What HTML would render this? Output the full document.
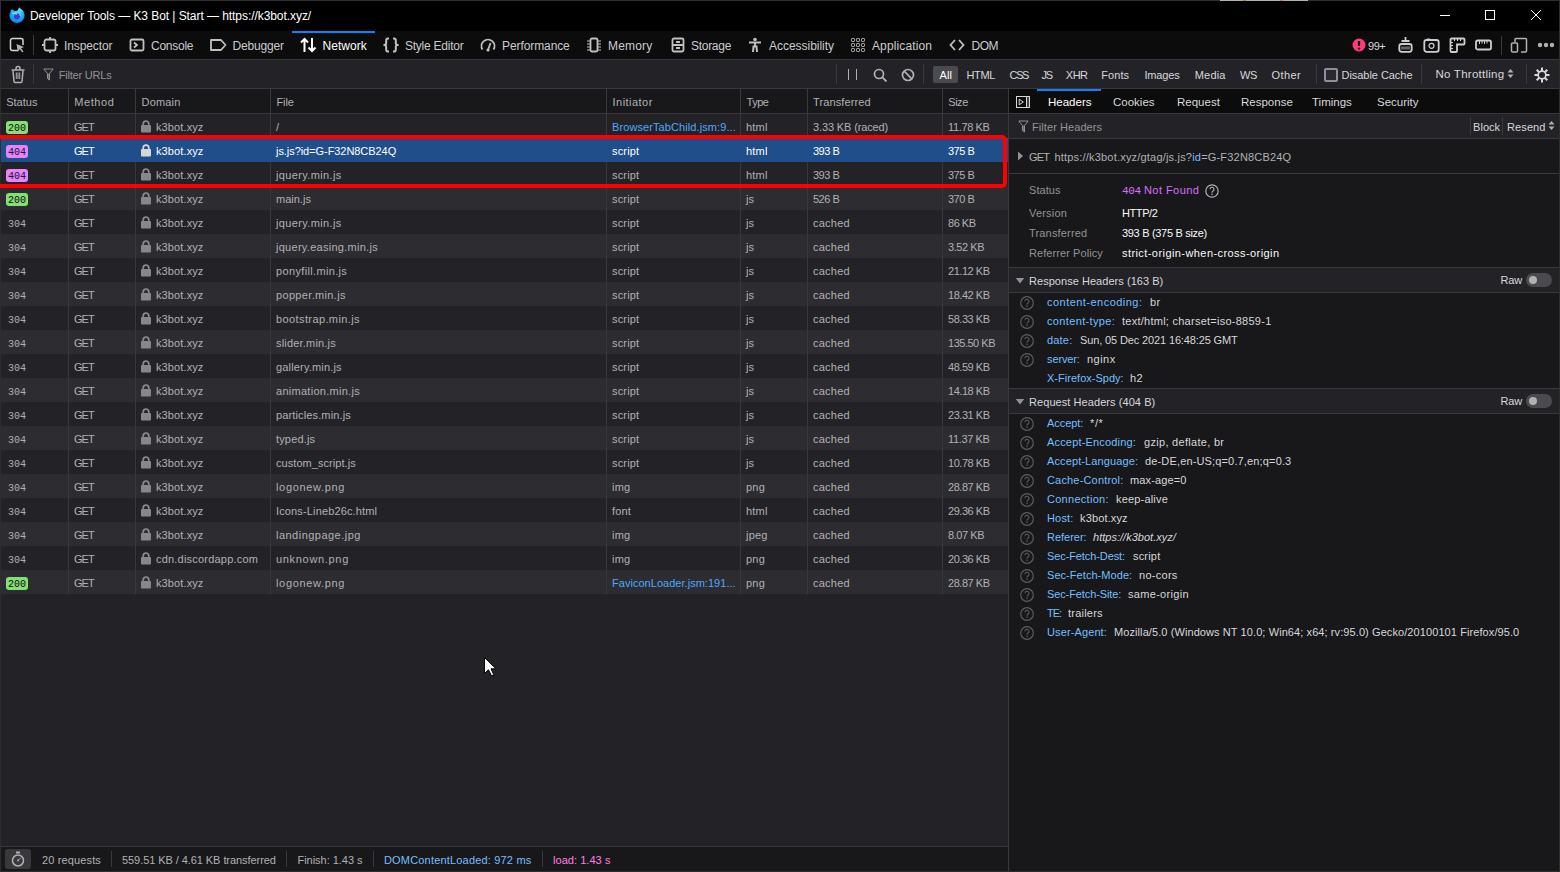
<!DOCTYPE html>
<html><head><meta charset="utf-8"><style>
html,body{margin:0;padding:0;width:1560px;height:872px;overflow:hidden;background:#000;font-family:'Liberation Sans', sans-serif}
.t{position:absolute;white-space:nowrap;font-family:'Liberation Sans', sans-serif}
svg{overflow:visible}
</style></head><body>
<div style="position:absolute;left:0px;top:0px;width:1560px;height:872px;background:#000;"></div>
<div style="position:absolute;left:0px;top:0px;width:1560px;height:1px;background:#2e2e2e;"></div>
<div style="position:absolute;left:1220px;top:0px;width:88px;height:1px;background:#b0b0b0;"></div>
<div style="position:absolute;left:1243px;top:0px;width:3px;height:1px;background:#c08030;"></div>
<div style="position:absolute;left:1280px;top:0px;width:3px;height:1px;background:#c08030;"></div>
<div class="t" style="left:30px;top:2px;line-height:29px;font-size:12px;color:#fff;font-family:'Liberation Sans', sans-serif;;letter-spacing:-0.061px">Developer Tools — K3 Bot | Start — https://k3bot.xyz/</div>
<svg style="position:absolute;left:9px;top:7px;" width="16" height="16" viewBox="0 0 16 16">
<defs><radialGradient id="fg" cx="55%" cy="35%" r="75%"><stop offset="0" stop-color="#60e6ff"/><stop offset="0.45" stop-color="#1fb0ff"/><stop offset="1" stop-color="#0a70e8"/></radialGradient>
<radialGradient id="fp" cx="50%" cy="60%" r="60%"><stop offset="0" stop-color="#4a2fd0"/><stop offset="1" stop-color="#2c50d8"/></radialGradient></defs>
<circle cx="8" cy="8.4" r="7.6" fill="url(#fg)"/>
<ellipse cx="6.6" cy="1.6" rx="3.4" ry="2.3" fill="#000"/>
<path d="M8.3 4.5 Q9.2 1.5 10.2 0.2 Q11.8 2.4 14.6 4.8 Q12 5 8.3 4.5 Z" fill="#48d8ff"/>
<path d="M1.5 3.5 Q2.5 2 3 3 Q3.6 2.5 4.5 3.2 L4 6 Z" fill="#2ab8ff"/>
<circle cx="8" cy="9.4" r="3.1" fill="url(#fp)"/>
<path d="M3 6.5 Q6 6 8.2 7.3" stroke="#a8f0ff" stroke-width="1.2" fill="none" opacity="0.8"/>
<path d="M10.5 6.5 Q11.5 7.5 11.3 9" stroke="#a8f0ff" stroke-width="0.9" fill="none" opacity="0.7"/>
</svg>
<div style="position:absolute;left:1440px;top:15px;width:10px;height:1px;background:#fff;"></div>
<div style="position:absolute;left:1485px;top:10px;width:10px;height:10px;background:transparent;border:1px solid #fff;box-sizing:border-box"></div>
<svg style="position:absolute;left:1530px;top:9px;" width="12" height="12" viewBox="0 0 12 12"><path d="M1 1 L11 11 M11 1 L1 11" stroke="#fff" stroke-width="1"/></svg>
<div style="position:absolute;left:1px;top:31px;width:1558px;height:28px;background:#0c0c0d;"></div>
<div style="position:absolute;left:1px;top:59px;width:1558px;height:1px;background:#38383d;"></div>
<svg style="position:absolute;left:9px;top:37px;" width="17" height="17" viewBox="0 0 17 17"><path d="M9 13.5 H3.5 a2 2 0 0 1 -2 -2 V3.5 a2 2 0 0 1 2 -2 H12 a2 2 0 0 1 2 2 V8" stroke="#d7d7db" stroke-width="1.5" fill="none"/>
<path d="M7.5 7 L15 10 L12 11.2 L14.5 14.5 L13.3 15.5 L10.8 12.2 L8.8 14.8 Z" fill="#b1b1b3"/></svg>
<div style="position:absolute;left:33px;top:35px;width:1px;height:20px;background:#38383d;"></div>
<svg style="position:absolute;left:42px;top:37px;" width="16" height="16" viewBox="0 0 16 16"><rect x="2.5" y="2.5" width="11" height="11" rx="2" stroke="#c0c0c2" stroke-width="1.8" fill="none"/><path d="M8 0 V2.5 M8 13.5 V16 M0 8 H2.5 M13.5 8 H16" stroke="#c0c0c2" stroke-width="1.8" fill="none"/></svg>
<div class="t" style="left:64px;top:32px;line-height:28px;font-size:12px;color:#cacace;font-family:'Liberation Sans', sans-serif;;letter-spacing:-0.105px">Inspector</div>
<svg style="position:absolute;left:129px;top:37px;" width="16" height="16" viewBox="0 0 16 16"><rect x="1.5" y="2.5" width="13" height="11" rx="1.5" stroke="#c0c0c2" stroke-width="1.8" fill="none"/><path d="M5 5.5 L8 8 L5 10.5" stroke="#c0c0c2" stroke-width="1.8" fill="none"/></svg>
<div class="t" style="left:151px;top:32px;line-height:28px;font-size:12px;color:#cacace;font-family:'Liberation Sans', sans-serif;;letter-spacing:-0.247px">Console</div>
<svg style="position:absolute;left:210px;top:37px;" width="17" height="16" viewBox="0 0 17 16"><path d="M1 3 H11 L15.5 8 L11 13 H1 Z" stroke-linejoin="round" stroke="#c0c0c2" stroke-width="1.8" fill="none"/></svg>
<div class="t" style="left:232.5px;top:32px;line-height:28px;font-size:12px;color:#cacace;font-family:'Liberation Sans', sans-serif;;letter-spacing:-0.175px">Debugger</div>
<svg style="position:absolute;left:300px;top:37px;" width="17" height="16" viewBox="0 0 17 16"><path d="M4.5 15 V2 M1 5.5 L4.5 2 L8 5.5 M12 1 V14 M8.5 10.5 L12 14 L15.5 10.5" stroke="#fff" stroke-width="2" fill="none"/></svg>
<div class="t" style="left:322.5px;top:32px;line-height:28px;font-size:12px;color:#fff;font-family:'Liberation Sans', sans-serif;;letter-spacing:0.026px">Network</div>
<svg style="position:absolute;left:383px;top:37px;" width="16" height="16" viewBox="0 0 16 16"><path d="M6 1.5 H5 Q3.2 1.5 3.2 3.3 V6 Q3.2 8 1.2 8 Q3.2 8 3.2 10 V12.7 Q3.2 14.5 5 14.5 H6 M10 1.5 H11 Q12.8 1.5 12.8 3.3 V6 Q12.8 8 14.8 8 Q12.8 8 12.8 10 V12.7 Q12.8 14.5 11 14.5 H10" stroke="#c0c0c2" stroke-width="2" fill="none" stroke-linejoin="round"/></svg>
<div class="t" style="left:405px;top:32px;line-height:28px;font-size:12px;color:#cacace;font-family:'Liberation Sans', sans-serif;;letter-spacing:-0.245px">Style Editor</div>
<svg style="position:absolute;left:480px;top:37px;" width="16" height="16" viewBox="0 0 16 16"><path d="M2.5 12.5 A6.5 6.5 0 1 1 13.5 12.5" stroke="#c0c0c2" stroke-width="1.8" fill="none"/><path d="M8 13 L10.5 6" stroke="#c0c0c2" stroke-width="1.8" fill="none"/><circle cx="8" cy="13" r="1.6" fill="#c0c0c2"/></svg>
<div class="t" style="left:502px;top:32px;line-height:28px;font-size:12px;color:#cacace;font-family:'Liberation Sans', sans-serif;;letter-spacing:-0.090px">Performance</div>
<svg style="position:absolute;left:586px;top:37px;" width="16" height="16" viewBox="0 0 16 16"><rect x="4.5" y="1.5" width="7" height="13" rx="1.5" stroke="#c0c0c2" stroke-width="1.8" fill="none"/><path d="M1 4 H4 M1 7 H4 M1 10 H4 M1 13 H4 M12 4 H15 M12 7 H15 M12 10 H15 M12 13 H15" stroke="#c0c0c2" stroke-width="1" fill="none"/></svg>
<div class="t" style="left:608px;top:32px;line-height:28px;font-size:12px;color:#cacace;font-family:'Liberation Sans', sans-serif;;letter-spacing:0.193px">Memory</div>
<svg style="position:absolute;left:670px;top:37px;" width="16" height="16" viewBox="0 0 16 16"><rect x="2.5" y="1.5" width="11" height="13" rx="1.5" stroke="#c0c0c2" stroke-width="1.8" fill="none"/><path d="M2.5 8 H13.5 M6 5 H10 M6 11 H10" stroke="#c0c0c2" stroke-width="1.8" fill="none"/></svg>
<div class="t" style="left:691px;top:32px;line-height:28px;font-size:12px;color:#cacace;font-family:'Liberation Sans', sans-serif;;letter-spacing:-0.288px">Storage</div>
<svg style="position:absolute;left:747px;top:37px;" width="16" height="16" viewBox="0 0 16 16"><circle cx="8" cy="2.5" r="1.8" fill="#c0c0c2"/><path d="M2 5.5 H14 M8 5.5 V9.5 M6 15 L6.5 9.5 H9.5 L10 15" stroke="#c0c0c2" stroke-width="2" fill="none"/></svg>
<div class="t" style="left:769px;top:32px;line-height:28px;font-size:12px;color:#cacace;font-family:'Liberation Sans', sans-serif;;letter-spacing:-0.028px">Accessibility</div>
<svg style="position:absolute;left:850px;top:37px;" width="16" height="16" viewBox="0 0 16 16"><rect x="1.5" y="1.5" width="3" height="3" rx="0.8" stroke="#c0c0c2" stroke-width="1" fill="none"/><rect x="1.5" y="6.5" width="3" height="3" rx="0.8" stroke="#c0c0c2" stroke-width="1" fill="none"/><rect x="1.5" y="11.5" width="3" height="3" rx="0.8" stroke="#c0c0c2" stroke-width="1" fill="none"/><rect x="6.5" y="1.5" width="3" height="3" rx="0.8" stroke="#c0c0c2" stroke-width="1" fill="none"/><rect x="6.5" y="6.5" width="3" height="3" rx="0.8" stroke="#c0c0c2" stroke-width="1" fill="none"/><rect x="6.5" y="11.5" width="3" height="3" rx="0.8" stroke="#c0c0c2" stroke-width="1" fill="none"/><rect x="11.5" y="1.5" width="3" height="3" rx="0.8" stroke="#c0c0c2" stroke-width="1" fill="none"/><rect x="11.5" y="6.5" width="3" height="3" rx="0.8" stroke="#c0c0c2" stroke-width="1" fill="none"/><rect x="11.5" y="11.5" width="3" height="3" rx="0.8" stroke="#c0c0c2" stroke-width="1" fill="none"/></svg>
<div class="t" style="left:872px;top:32px;line-height:28px;font-size:12px;color:#cacace;font-family:'Liberation Sans', sans-serif;;letter-spacing:0.118px">Application</div>
<svg style="position:absolute;left:949px;top:37px;" width="16" height="16" viewBox="0 0 16 16"><path d="M6 3 L1.5 8 L6 13 M10 3 L14.5 8 L10 13" stroke="#c0c0c2" stroke-width="1.8" fill="none"/></svg>
<div class="t" style="left:971.5px;top:32px;line-height:28px;font-size:12px;color:#cacace;font-family:'Liberation Sans', sans-serif;;letter-spacing:-0.500px">DOM</div>
<div style="position:absolute;left:292px;top:31px;width:83px;height:2px;background:#0a84ff;"></div>
<svg style="position:absolute;left:1352px;top:38px;" width="14" height="14" viewBox="0 0 14 14"><circle cx="7" cy="7" r="6.5" fill="#ff3a77"/><path d="M7 3 V8" stroke="#0c0c0d" stroke-width="2.2"/><circle cx="7" cy="10.6" r="1.2" fill="#0c0c0d"/></svg>
<div class="t" style="left:1368px;top:32px;line-height:28px;font-size:11px;color:#d7d7db;font-family:'Liberation Sans', sans-serif;;letter-spacing:-0.449px">99+</div>
<svg style="position:absolute;left:1398px;top:36px;" width="15" height="17" viewBox="0 0 15 17"><path d="M7.5 1 V5 M3.5 5 H11.5" stroke="#cdcdd1" stroke-width="1.8"/><rect x="1.3" y="8" width="12.4" height="7.8" rx="2.2" stroke="#cdcdd1" stroke-width="1.8" fill="none"/><rect x="3" y="10.5" width="9" height="3" fill="#cdcdd1" opacity="0.45"/></svg>
<svg style="position:absolute;left:1423px;top:37px;" width="17" height="16" viewBox="0 0 17 16"><rect x="1.3" y="3" width="14.4" height="11.8" rx="2.3" stroke="#cdcdd1" stroke-width="1.8" fill="none"/><circle cx="8.5" cy="8.8" r="2.5" stroke="#cdcdd1" stroke-width="1.2" fill="none"/><path d="M4.5 2.2 H6.5" stroke="#cdcdd1" stroke-width="1.5" stroke-linecap="round"/></svg>
<svg style="position:absolute;left:1449px;top:37px;" width="17" height="16" viewBox="0 0 17 16"><path d="M2.5 1.5 H14.5 a1 1 0 0 1 1 1 V6.5 a1 1 0 0 1 -1 1 H8 V14 a1 1 0 0 1 -1 1 H2.5 a1 1 0 0 1 -1 -1 V2.5 a1 1 0 0 1 1 -1 Z" stroke="#cdcdd1" stroke-width="1.8" fill="none"/><path d="M5.5 2 V4 M8.5 2 V4 M11.5 2 V4 M2 5.5 H4 M2 8.5 H4 M2 11.5 H4" stroke="#cdcdd1" stroke-width="1"/></svg>
<svg style="position:absolute;left:1475px;top:39px;" width="17" height="12" viewBox="0 0 17 12"><rect x="1" y="1.5" width="15" height="9" rx="1.8" stroke="#cdcdd1" stroke-width="1.8" fill="none"/><path d="M4.5 2 V5 M7 2 V4.5 M9.5 2 V5 M12 2 V4.5" stroke="#cdcdd1" stroke-width="1"/></svg>
<div style="position:absolute;left:1501px;top:36px;width:1px;height:19px;background:#38383d;"></div>
<svg style="position:absolute;left:1510px;top:37px;" width="18" height="17" viewBox="0 0 18 17"><path d="M5 5 V2.5 a1 1 0 0 1 1 -1 H15.5 a1 1 0 0 1 1 1 V14 a1 1 0 0 1 -1 1 H11" stroke="#b1b1b3" stroke-width="1.5" fill="none"/><rect x="1.5" y="6" width="6" height="9" rx="1" stroke="#b1b1b3" stroke-width="1.5" fill="none"/></svg>
<svg style="position:absolute;left:1537px;top:42px;" width="18" height="6" viewBox="0 0 18 6"><circle cx="3" cy="3" r="2.2" fill="#b1b1b3"/><circle cx="9" cy="3" r="2.2" fill="#b1b1b3"/><circle cx="15" cy="3" r="2.2" fill="#b1b1b3"/></svg>
<div style="position:absolute;left:1px;top:60px;width:1558px;height:28px;background:#232327;"></div>
<div style="position:absolute;left:1px;top:88px;width:1558px;height:1px;background:#38383d;"></div>
<svg style="position:absolute;left:10px;top:66px;" width="16" height="18" viewBox="0 0 16 18"><path d="M1.5 4 H14.5 M6 4 V2.5 a1.5 1.5 0 0 1 4 0 V4" stroke="#b1b1b3" stroke-width="1.5" fill="none"/><path d="M3 4.5 L4 15.5 a1 1 0 0 0 1 1 H11 a1 1 0 0 0 1 -1 L13 4.5" stroke="#b1b1b3" stroke-width="1.5" fill="none"/><path d="M6.3 6.5 V13 M8 6.5 V13 M9.7 6.5 V13" stroke="#b1b1b3" stroke-width="1"/></svg>
<div style="position:absolute;left:33px;top:64px;width:1px;height:20px;background:#38383d;"></div>
<svg style="position:absolute;left:43px;top:68px;" width="11" height="13" viewBox="0 0 11 13"><path d="M4.5 5.5 H6.5 V12 L4.5 10.5 Z" fill="#6a6a6e"/><path d="M0.8 1 H10.2 L6.5 5.5 V12 L4.5 10.5 V5.5 Z" stroke="#939395" stroke-width="1" fill="none" stroke-linejoin="round"/></svg>
<div class="t" style="left:58.7px;top:61px;line-height:28px;font-size:11px;color:#939395;font-family:'Liberation Sans', sans-serif;;letter-spacing:-0.200px">Filter URLs</div>
<div style="position:absolute;left:836px;top:64px;width:1px;height:20px;background:#38383d;"></div>
<div style="position:absolute;left:848px;top:69px;width:1px;height:11px;background:#b1b1b3;"></div>
<div style="position:absolute;left:856px;top:69px;width:1px;height:11px;background:#b1b1b3;"></div>
<svg style="position:absolute;left:873px;top:68px;" width="15" height="15" viewBox="0 0 15 15"><circle cx="6" cy="6" r="4.5" stroke="#b1b1b3" stroke-width="1.7" fill="none"/><path d="M9.2 9.2 L13.5 13.5" stroke="#b1b1b3" stroke-width="1.8"/></svg>
<svg style="position:absolute;left:901px;top:68px;" width="14" height="14" viewBox="0 0 14 14"><circle cx="7" cy="7" r="5.5" stroke="#b1b1b3" stroke-width="1.7" fill="none"/><path d="M3.2 3.2 L10.8 10.8" stroke="#b1b1b3" stroke-width="1.7"/></svg>
<div style="position:absolute;left:923px;top:64px;width:1px;height:20px;background:#38383d;"></div>
<div style="position:absolute;left:933px;top:66px;width:25px;height:17px;background:#4a4a4f;border-radius:2px"></div>
<div class="t" style="left:939.5px;top:61px;line-height:28px;font-size:11px;color:#fff;font-family:'Liberation Sans', sans-serif;;letter-spacing:0.094px">All</div>
<div class="t" style="left:966.5px;top:61px;line-height:28px;font-size:11px;color:#d7d7db;font-family:'Liberation Sans', sans-serif;;letter-spacing:-0.359px">HTML</div>
<div class="t" style="left:1009.6px;top:61px;line-height:28px;font-size:11px;color:#d7d7db;font-family:'Liberation Sans', sans-serif;;letter-spacing:-1.408px">CSS</div>
<div class="t" style="left:1041.5px;top:61px;line-height:28px;font-size:11px;color:#d7d7db;font-family:'Liberation Sans', sans-serif;;letter-spacing:-1.172px">JS</div>
<div class="t" style="left:1065.8px;top:61px;line-height:28px;font-size:11px;color:#d7d7db;font-family:'Liberation Sans', sans-serif;;letter-spacing:-0.506px">XHR</div>
<div class="t" style="left:1101.2px;top:61px;line-height:28px;font-size:11px;color:#d7d7db;font-family:'Liberation Sans', sans-serif;;letter-spacing:0.094px">Fonts</div>
<div class="t" style="left:1144.5px;top:61px;line-height:28px;font-size:11px;color:#d7d7db;font-family:'Liberation Sans', sans-serif;;letter-spacing:-0.182px">Images</div>
<div class="t" style="left:1194.7px;top:61px;line-height:28px;font-size:11px;color:#d7d7db;font-family:'Liberation Sans', sans-serif;;letter-spacing:0.206px">Media</div>
<div class="t" style="left:1240px;top:61px;line-height:28px;font-size:11px;color:#d7d7db;font-family:'Liberation Sans', sans-serif;;letter-spacing:-0.359px">WS</div>
<div class="t" style="left:1271.6px;top:61px;line-height:28px;font-size:11px;color:#d7d7db;font-family:'Liberation Sans', sans-serif;;letter-spacing:0.374px">Other</div>
<div style="position:absolute;left:1316px;top:64px;width:1px;height:20px;background:#38383d;"></div>
<div style="position:absolute;left:1324px;top:68px;width:14px;height:14px;background:#2a2a2e;border:2px solid #8f8f9d;border-radius:2px;box-sizing:border-box"></div>
<div class="t" style="left:1341.5px;top:61px;line-height:28px;font-size:11px;color:#d7d7db;font-family:'Liberation Sans', sans-serif;;letter-spacing:-0.043px">Disable Cache</div>
<div style="position:absolute;left:1421px;top:64px;width:1px;height:20px;background:#38383d;"></div>
<div class="t" style="left:1435.4px;top:60px;line-height:28px;font-size:11.5px;color:#d7d7db;font-family:'Liberation Sans', sans-serif;;letter-spacing:0.261px">No Throttling</div>
<svg style="position:absolute;left:1507px;top:68px;" width="7" height="11" viewBox="0 0 7 11"><path d="M0.5 4.5 L3.5 1 L6.5 4.5 Z M0.5 6.5 L3.5 10 L6.5 6.5 Z" fill="#b1b1b3"/></svg>
<div style="position:absolute;left:1526px;top:64px;width:1px;height:20px;background:#38383d;"></div>
<svg style="position:absolute;left:1533px;top:66px;" width="18" height="18" viewBox="0 0 18 18"><circle cx="9" cy="9" r="3.8" stroke="#d7d7db" stroke-width="1.8" fill="none"/><path d="M9 9 L16.50 9.00" stroke="#d7d7db" stroke-width="2"/><path d="M9 9 L14.30 14.30" stroke="#d7d7db" stroke-width="2"/><path d="M9 9 L9.00 16.50" stroke="#d7d7db" stroke-width="2"/><path d="M9 9 L3.70 14.30" stroke="#d7d7db" stroke-width="2"/><path d="M9 9 L1.50 9.00" stroke="#d7d7db" stroke-width="2"/><path d="M9 9 L3.70 3.70" stroke="#d7d7db" stroke-width="2"/><path d="M9 9 L9.00 1.50" stroke="#d7d7db" stroke-width="2"/><path d="M9 9 L14.30 3.70" stroke="#d7d7db" stroke-width="2"/><circle cx="9" cy="9" r="3" fill="#232327"/></svg>
<div style="position:absolute;left:1px;top:89px;width:1007px;height:757px;background:#232327;"></div>
<div style="position:absolute;left:1px;top:89px;width:1007px;height:24px;background:#18181a;"></div>
<div style="position:absolute;left:1px;top:113px;width:1007px;height:1px;background:#38383d;"></div>
<div style="position:absolute;left:68px;top:89px;width:1px;height:24px;background:#38383d;"></div>
<div style="position:absolute;left:135px;top:89px;width:1px;height:24px;background:#38383d;"></div>
<div style="position:absolute;left:270px;top:89px;width:1px;height:24px;background:#38383d;"></div>
<div style="position:absolute;left:606px;top:89px;width:1px;height:24px;background:#38383d;"></div>
<div style="position:absolute;left:740px;top:89px;width:1px;height:24px;background:#38383d;"></div>
<div style="position:absolute;left:807px;top:89px;width:1px;height:24px;background:#38383d;"></div>
<div style="position:absolute;left:942px;top:89px;width:1px;height:24px;background:#38383d;"></div>
<div class="t" style="left:6.2px;top:90px;line-height:24px;font-size:11px;color:#b1b1b3;font-family:'Liberation Sans', sans-serif;;letter-spacing:0.014px">Status</div>
<div class="t" style="left:74.3px;top:90px;line-height:24px;font-size:11px;color:#b1b1b3;font-family:'Liberation Sans', sans-serif;;letter-spacing:0.580px">Method</div>
<div class="t" style="left:141.5px;top:90px;line-height:24px;font-size:11px;color:#b1b1b3;font-family:'Liberation Sans', sans-serif;;letter-spacing:0.182px">Domain</div>
<div class="t" style="left:276.5px;top:90px;line-height:24px;font-size:11px;color:#b1b1b3;font-family:'Liberation Sans', sans-serif;;letter-spacing:-0.130px">File</div>
<div class="t" style="left:612.6px;top:90px;line-height:24px;font-size:11px;color:#b1b1b3;font-family:'Liberation Sans', sans-serif;;letter-spacing:0.456px">Initiator</div>
<div class="t" style="left:746.5px;top:90px;line-height:24px;font-size:11px;color:#b1b1b3;font-family:'Liberation Sans', sans-serif;;letter-spacing:-0.465px">Type</div>
<div class="t" style="left:813px;top:90px;line-height:24px;font-size:11px;color:#b1b1b3;font-family:'Liberation Sans', sans-serif;;letter-spacing:0.121px">Transferred</div>
<div class="t" style="left:948.3px;top:90px;line-height:24px;font-size:11px;color:#b1b1b3;font-family:'Liberation Sans', sans-serif;;letter-spacing:-0.477px">Size</div>
<div style="position:absolute;left:1px;top:114px;width:1007px;height:24px;background:#232327;"></div>
<div style="position:absolute;left:68px;top:114px;width:1px;height:24px;background:#38383d;"></div>
<div style="position:absolute;left:135px;top:114px;width:1px;height:24px;background:#38383d;"></div>
<div style="position:absolute;left:270px;top:114px;width:1px;height:24px;background:#38383d;"></div>
<div style="position:absolute;left:606px;top:114px;width:1px;height:24px;background:#38383d;"></div>
<div style="position:absolute;left:740px;top:114px;width:1px;height:24px;background:#38383d;"></div>
<div style="position:absolute;left:807px;top:114px;width:1px;height:24px;background:#38383d;"></div>
<div style="position:absolute;left:942px;top:114px;width:1px;height:24px;background:#38383d;"></div>
<div style="position:absolute;left:6px;top:121px;width:22px;height:13px;background:#86de74;border-radius:3px"></div>
<div class="t" style="left:6px;top:117px;line-height:24px;font-size:10px;color:#0c0c0d;font-family:'Liberation Mono', monospace;width:22px;text-align:center">200</div>
<div class="t" style="left:74px;top:115px;line-height:24px;font-size:11px;color:#b1b1b3;font-family:'Liberation Sans', sans-serif;letter-spacing:-1px">GET</div>
<svg style="position:absolute;left:141px;top:119px;" width="10" height="14" viewBox="0 0 10 14"><path d="M2.2 6.5 V4.9 a2.8 2.8 0 0 1 5.6 0 V6.5" stroke="#88888c" stroke-width="1.7" fill="none"/><rect x="0" y="6" width="10" height="7.6" rx="0.8" fill="#88888c"/></svg>
<div class="t" style="left:156px;top:115px;line-height:24px;font-size:11px;color:#b1b1b3;font-family:'Liberation Sans', sans-serif;;letter-spacing:0.111px">k3bot.xyz</div>
<div class="t" style="left:276px;top:115px;line-height:24px;font-size:11px;color:#b1b1b3;font-family:'Liberation Sans', sans-serif;;letter-spacing:0.000px">/</div>
<div class="t" style="left:612px;top:115px;line-height:24px;font-size:11px;color:#4fa8ff;font-family:'Liberation Sans', sans-serif;;letter-spacing:0.091px">BrowserTabChild.jsm:9...</div>
<div class="t" style="left:746px;top:115px;line-height:24px;font-size:11px;color:#b1b1b3;font-family:'Liberation Sans', sans-serif;;letter-spacing:0.208px">html</div>
<div class="t" style="left:813px;top:115px;line-height:24px;font-size:11px;color:#b1b1b3;font-family:'Liberation Sans', sans-serif;;letter-spacing:-0.130px">3.33 KB (raced)</div>
<div class="t" style="left:948px;top:115px;line-height:24px;font-size:11px;color:#b1b1b3;font-family:'Liberation Sans', sans-serif;;letter-spacing:-0.364px">11.78 KB</div>
<div style="position:absolute;left:1px;top:138px;width:1007px;height:24px;background:#204e8a;"></div>
<div style="position:absolute;left:6px;top:145px;width:22px;height:13px;background:#e982ff;border-radius:3px"></div>
<div class="t" style="left:6px;top:141px;line-height:24px;font-size:10px;color:#141428;font-family:'Liberation Mono', monospace;width:22px;text-align:center">404</div>
<div class="t" style="left:74px;top:139px;line-height:24px;font-size:11px;color:#fff;font-family:'Liberation Sans', sans-serif;letter-spacing:-1px">GET</div>
<svg style="position:absolute;left:141px;top:143px;" width="10" height="14" viewBox="0 0 10 14"><path d="M2.2 6.5 V4.9 a2.8 2.8 0 0 1 5.6 0 V6.5" stroke="#d7d7db" stroke-width="1.7" fill="none"/><rect x="0" y="6" width="10" height="7.6" rx="0.8" fill="#d7d7db"/></svg>
<div class="t" style="left:156px;top:139px;line-height:24px;font-size:11px;color:#fff;font-family:'Liberation Sans', sans-serif;;letter-spacing:0.111px">k3bot.xyz</div>
<div class="t" style="left:276px;top:139px;line-height:24px;font-size:11px;color:#fff;font-family:'Liberation Sans', sans-serif;;letter-spacing:-0.057px">js.js?id=G-F32N8CB24Q</div>
<div class="t" style="left:612px;top:139px;line-height:24px;font-size:11px;color:#fff;font-family:'Liberation Sans', sans-serif;;letter-spacing:0.175px">script</div>
<div class="t" style="left:746px;top:139px;line-height:24px;font-size:11px;color:#fff;font-family:'Liberation Sans', sans-serif;;letter-spacing:0.208px">html</div>
<div class="t" style="left:813px;top:139px;line-height:24px;font-size:11px;color:#fff;font-family:'Liberation Sans', sans-serif;;letter-spacing:-0.507px">393 B</div>
<div class="t" style="left:948px;top:139px;line-height:24px;font-size:11px;color:#fff;font-family:'Liberation Sans', sans-serif;;letter-spacing:-0.507px">375 B</div>
<div style="position:absolute;left:1px;top:162px;width:1007px;height:24px;background:#232327;"></div>
<div style="position:absolute;left:68px;top:162px;width:1px;height:24px;background:#38383d;"></div>
<div style="position:absolute;left:135px;top:162px;width:1px;height:24px;background:#38383d;"></div>
<div style="position:absolute;left:270px;top:162px;width:1px;height:24px;background:#38383d;"></div>
<div style="position:absolute;left:606px;top:162px;width:1px;height:24px;background:#38383d;"></div>
<div style="position:absolute;left:740px;top:162px;width:1px;height:24px;background:#38383d;"></div>
<div style="position:absolute;left:807px;top:162px;width:1px;height:24px;background:#38383d;"></div>
<div style="position:absolute;left:942px;top:162px;width:1px;height:24px;background:#38383d;"></div>
<div style="position:absolute;left:6px;top:169px;width:22px;height:13px;background:#e982ff;border-radius:3px"></div>
<div class="t" style="left:6px;top:165px;line-height:24px;font-size:10px;color:#141428;font-family:'Liberation Mono', monospace;width:22px;text-align:center">404</div>
<div class="t" style="left:74px;top:163px;line-height:24px;font-size:11px;color:#b1b1b3;font-family:'Liberation Sans', sans-serif;letter-spacing:-1px">GET</div>
<svg style="position:absolute;left:141px;top:167px;" width="10" height="14" viewBox="0 0 10 14"><path d="M2.2 6.5 V4.9 a2.8 2.8 0 0 1 5.6 0 V6.5" stroke="#88888c" stroke-width="1.7" fill="none"/><rect x="0" y="6" width="10" height="7.6" rx="0.8" fill="#88888c"/></svg>
<div class="t" style="left:156px;top:163px;line-height:24px;font-size:11px;color:#b1b1b3;font-family:'Liberation Sans', sans-serif;;letter-spacing:0.111px">k3bot.xyz</div>
<div class="t" style="left:276px;top:163px;line-height:24px;font-size:11px;color:#b1b1b3;font-family:'Liberation Sans', sans-serif;;letter-spacing:0.359px">jquery.min.js</div>
<div class="t" style="left:612px;top:163px;line-height:24px;font-size:11px;color:#b1b1b3;font-family:'Liberation Sans', sans-serif;;letter-spacing:0.175px">script</div>
<div class="t" style="left:746px;top:163px;line-height:24px;font-size:11px;color:#b1b1b3;font-family:'Liberation Sans', sans-serif;;letter-spacing:0.208px">html</div>
<div class="t" style="left:813px;top:163px;line-height:24px;font-size:11px;color:#b1b1b3;font-family:'Liberation Sans', sans-serif;;letter-spacing:-0.507px">393 B</div>
<div class="t" style="left:948px;top:163px;line-height:24px;font-size:11px;color:#b1b1b3;font-family:'Liberation Sans', sans-serif;;letter-spacing:-0.507px">375 B</div>
<div style="position:absolute;left:1px;top:186px;width:1007px;height:24px;background:#2c2c31;"></div>
<div style="position:absolute;left:68px;top:186px;width:1px;height:24px;background:#38383d;"></div>
<div style="position:absolute;left:135px;top:186px;width:1px;height:24px;background:#38383d;"></div>
<div style="position:absolute;left:270px;top:186px;width:1px;height:24px;background:#38383d;"></div>
<div style="position:absolute;left:606px;top:186px;width:1px;height:24px;background:#38383d;"></div>
<div style="position:absolute;left:740px;top:186px;width:1px;height:24px;background:#38383d;"></div>
<div style="position:absolute;left:807px;top:186px;width:1px;height:24px;background:#38383d;"></div>
<div style="position:absolute;left:942px;top:186px;width:1px;height:24px;background:#38383d;"></div>
<div style="position:absolute;left:6px;top:193px;width:22px;height:13px;background:#86de74;border-radius:3px"></div>
<div class="t" style="left:6px;top:189px;line-height:24px;font-size:10px;color:#0c0c0d;font-family:'Liberation Mono', monospace;width:22px;text-align:center">200</div>
<div class="t" style="left:74px;top:187px;line-height:24px;font-size:11px;color:#b1b1b3;font-family:'Liberation Sans', sans-serif;letter-spacing:-1px">GET</div>
<svg style="position:absolute;left:141px;top:191px;" width="10" height="14" viewBox="0 0 10 14"><path d="M2.2 6.5 V4.9 a2.8 2.8 0 0 1 5.6 0 V6.5" stroke="#88888c" stroke-width="1.7" fill="none"/><rect x="0" y="6" width="10" height="7.6" rx="0.8" fill="#88888c"/></svg>
<div class="t" style="left:156px;top:187px;line-height:24px;font-size:11px;color:#b1b1b3;font-family:'Liberation Sans', sans-serif;;letter-spacing:0.111px">k3bot.xyz</div>
<div class="t" style="left:276px;top:187px;line-height:24px;font-size:11px;color:#b1b1b3;font-family:'Liberation Sans', sans-serif;;letter-spacing:0.008px">main.js</div>
<div class="t" style="left:612px;top:187px;line-height:24px;font-size:11px;color:#b1b1b3;font-family:'Liberation Sans', sans-serif;;letter-spacing:0.175px">script</div>
<div class="t" style="left:746px;top:187px;line-height:24px;font-size:11px;color:#b1b1b3;font-family:'Liberation Sans', sans-serif;;letter-spacing:0.159px">js</div>
<div class="t" style="left:813px;top:187px;line-height:24px;font-size:11px;color:#b1b1b3;font-family:'Liberation Sans', sans-serif;;letter-spacing:-0.507px">526 B</div>
<div class="t" style="left:948px;top:187px;line-height:24px;font-size:11px;color:#b1b1b3;font-family:'Liberation Sans', sans-serif;;letter-spacing:-0.507px">370 B</div>
<div style="position:absolute;left:1px;top:210px;width:1007px;height:24px;background:#232327;"></div>
<div style="position:absolute;left:68px;top:210px;width:1px;height:24px;background:#38383d;"></div>
<div style="position:absolute;left:135px;top:210px;width:1px;height:24px;background:#38383d;"></div>
<div style="position:absolute;left:270px;top:210px;width:1px;height:24px;background:#38383d;"></div>
<div style="position:absolute;left:606px;top:210px;width:1px;height:24px;background:#38383d;"></div>
<div style="position:absolute;left:740px;top:210px;width:1px;height:24px;background:#38383d;"></div>
<div style="position:absolute;left:807px;top:210px;width:1px;height:24px;background:#38383d;"></div>
<div style="position:absolute;left:942px;top:210px;width:1px;height:24px;background:#38383d;"></div>
<div class="t" style="left:6px;top:213px;line-height:24px;font-size:10px;color:#b1b1b3;font-family:'Liberation Mono', monospace;width:22px;text-align:center">304</div>
<div class="t" style="left:74px;top:211px;line-height:24px;font-size:11px;color:#b1b1b3;font-family:'Liberation Sans', sans-serif;letter-spacing:-1px">GET</div>
<svg style="position:absolute;left:141px;top:215px;" width="10" height="14" viewBox="0 0 10 14"><path d="M2.2 6.5 V4.9 a2.8 2.8 0 0 1 5.6 0 V6.5" stroke="#88888c" stroke-width="1.7" fill="none"/><rect x="0" y="6" width="10" height="7.6" rx="0.8" fill="#88888c"/></svg>
<div class="t" style="left:156px;top:211px;line-height:24px;font-size:11px;color:#b1b1b3;font-family:'Liberation Sans', sans-serif;;letter-spacing:0.111px">k3bot.xyz</div>
<div class="t" style="left:276px;top:211px;line-height:24px;font-size:11px;color:#b1b1b3;font-family:'Liberation Sans', sans-serif;;letter-spacing:0.359px">jquery.min.js</div>
<div class="t" style="left:612px;top:211px;line-height:24px;font-size:11px;color:#b1b1b3;font-family:'Liberation Sans', sans-serif;;letter-spacing:0.175px">script</div>
<div class="t" style="left:746px;top:211px;line-height:24px;font-size:11px;color:#b1b1b3;font-family:'Liberation Sans', sans-serif;;letter-spacing:0.159px">js</div>
<div class="t" style="left:813px;top:211px;line-height:24px;font-size:11px;color:#b1b1b3;font-family:'Liberation Sans', sans-serif;;letter-spacing:0.237px">cached</div>
<div class="t" style="left:948px;top:211px;line-height:24px;font-size:11px;color:#b1b1b3;font-family:'Liberation Sans', sans-serif;;letter-spacing:-0.475px">86 KB</div>
<div style="position:absolute;left:1px;top:234px;width:1007px;height:24px;background:#2c2c31;"></div>
<div style="position:absolute;left:68px;top:234px;width:1px;height:24px;background:#38383d;"></div>
<div style="position:absolute;left:135px;top:234px;width:1px;height:24px;background:#38383d;"></div>
<div style="position:absolute;left:270px;top:234px;width:1px;height:24px;background:#38383d;"></div>
<div style="position:absolute;left:606px;top:234px;width:1px;height:24px;background:#38383d;"></div>
<div style="position:absolute;left:740px;top:234px;width:1px;height:24px;background:#38383d;"></div>
<div style="position:absolute;left:807px;top:234px;width:1px;height:24px;background:#38383d;"></div>
<div style="position:absolute;left:942px;top:234px;width:1px;height:24px;background:#38383d;"></div>
<div class="t" style="left:6px;top:237px;line-height:24px;font-size:10px;color:#b1b1b3;font-family:'Liberation Mono', monospace;width:22px;text-align:center">304</div>
<div class="t" style="left:74px;top:235px;line-height:24px;font-size:11px;color:#b1b1b3;font-family:'Liberation Sans', sans-serif;letter-spacing:-1px">GET</div>
<svg style="position:absolute;left:141px;top:239px;" width="10" height="14" viewBox="0 0 10 14"><path d="M2.2 6.5 V4.9 a2.8 2.8 0 0 1 5.6 0 V6.5" stroke="#88888c" stroke-width="1.7" fill="none"/><rect x="0" y="6" width="10" height="7.6" rx="0.8" fill="#88888c"/></svg>
<div class="t" style="left:156px;top:235px;line-height:24px;font-size:11px;color:#b1b1b3;font-family:'Liberation Sans', sans-serif;;letter-spacing:0.111px">k3bot.xyz</div>
<div class="t" style="left:276px;top:235px;line-height:24px;font-size:11px;color:#b1b1b3;font-family:'Liberation Sans', sans-serif;;letter-spacing:0.278px">jquery.easing.min.js</div>
<div class="t" style="left:612px;top:235px;line-height:24px;font-size:11px;color:#b1b1b3;font-family:'Liberation Sans', sans-serif;;letter-spacing:0.175px">script</div>
<div class="t" style="left:746px;top:235px;line-height:24px;font-size:11px;color:#b1b1b3;font-family:'Liberation Sans', sans-serif;;letter-spacing:0.159px">js</div>
<div class="t" style="left:813px;top:235px;line-height:24px;font-size:11px;color:#b1b1b3;font-family:'Liberation Sans', sans-serif;;letter-spacing:0.237px">cached</div>
<div class="t" style="left:948px;top:235px;line-height:24px;font-size:11px;color:#b1b1b3;font-family:'Liberation Sans', sans-serif;;letter-spacing:-0.436px">3.52 KB</div>
<div style="position:absolute;left:1px;top:258px;width:1007px;height:24px;background:#232327;"></div>
<div style="position:absolute;left:68px;top:258px;width:1px;height:24px;background:#38383d;"></div>
<div style="position:absolute;left:135px;top:258px;width:1px;height:24px;background:#38383d;"></div>
<div style="position:absolute;left:270px;top:258px;width:1px;height:24px;background:#38383d;"></div>
<div style="position:absolute;left:606px;top:258px;width:1px;height:24px;background:#38383d;"></div>
<div style="position:absolute;left:740px;top:258px;width:1px;height:24px;background:#38383d;"></div>
<div style="position:absolute;left:807px;top:258px;width:1px;height:24px;background:#38383d;"></div>
<div style="position:absolute;left:942px;top:258px;width:1px;height:24px;background:#38383d;"></div>
<div class="t" style="left:6px;top:261px;line-height:24px;font-size:10px;color:#b1b1b3;font-family:'Liberation Mono', monospace;width:22px;text-align:center">304</div>
<div class="t" style="left:74px;top:259px;line-height:24px;font-size:11px;color:#b1b1b3;font-family:'Liberation Sans', sans-serif;letter-spacing:-1px">GET</div>
<svg style="position:absolute;left:141px;top:263px;" width="10" height="14" viewBox="0 0 10 14"><path d="M2.2 6.5 V4.9 a2.8 2.8 0 0 1 5.6 0 V6.5" stroke="#88888c" stroke-width="1.7" fill="none"/><rect x="0" y="6" width="10" height="7.6" rx="0.8" fill="#88888c"/></svg>
<div class="t" style="left:156px;top:259px;line-height:24px;font-size:11px;color:#b1b1b3;font-family:'Liberation Sans', sans-serif;;letter-spacing:0.111px">k3bot.xyz</div>
<div class="t" style="left:276px;top:259px;line-height:24px;font-size:11px;color:#b1b1b3;font-family:'Liberation Sans', sans-serif;;letter-spacing:0.345px">ponyfill.min.js</div>
<div class="t" style="left:612px;top:259px;line-height:24px;font-size:11px;color:#b1b1b3;font-family:'Liberation Sans', sans-serif;;letter-spacing:0.175px">script</div>
<div class="t" style="left:746px;top:259px;line-height:24px;font-size:11px;color:#b1b1b3;font-family:'Liberation Sans', sans-serif;;letter-spacing:0.159px">js</div>
<div class="t" style="left:813px;top:259px;line-height:24px;font-size:11px;color:#b1b1b3;font-family:'Liberation Sans', sans-serif;;letter-spacing:0.237px">cached</div>
<div class="t" style="left:948px;top:259px;line-height:24px;font-size:11px;color:#b1b1b3;font-family:'Liberation Sans', sans-serif;;letter-spacing:-0.465px">21.12 KB</div>
<div style="position:absolute;left:1px;top:282px;width:1007px;height:24px;background:#2c2c31;"></div>
<div style="position:absolute;left:68px;top:282px;width:1px;height:24px;background:#38383d;"></div>
<div style="position:absolute;left:135px;top:282px;width:1px;height:24px;background:#38383d;"></div>
<div style="position:absolute;left:270px;top:282px;width:1px;height:24px;background:#38383d;"></div>
<div style="position:absolute;left:606px;top:282px;width:1px;height:24px;background:#38383d;"></div>
<div style="position:absolute;left:740px;top:282px;width:1px;height:24px;background:#38383d;"></div>
<div style="position:absolute;left:807px;top:282px;width:1px;height:24px;background:#38383d;"></div>
<div style="position:absolute;left:942px;top:282px;width:1px;height:24px;background:#38383d;"></div>
<div class="t" style="left:6px;top:285px;line-height:24px;font-size:10px;color:#b1b1b3;font-family:'Liberation Mono', monospace;width:22px;text-align:center">304</div>
<div class="t" style="left:74px;top:283px;line-height:24px;font-size:11px;color:#b1b1b3;font-family:'Liberation Sans', sans-serif;letter-spacing:-1px">GET</div>
<svg style="position:absolute;left:141px;top:287px;" width="10" height="14" viewBox="0 0 10 14"><path d="M2.2 6.5 V4.9 a2.8 2.8 0 0 1 5.6 0 V6.5" stroke="#88888c" stroke-width="1.7" fill="none"/><rect x="0" y="6" width="10" height="7.6" rx="0.8" fill="#88888c"/></svg>
<div class="t" style="left:156px;top:283px;line-height:24px;font-size:11px;color:#b1b1b3;font-family:'Liberation Sans', sans-serif;;letter-spacing:0.111px">k3bot.xyz</div>
<div class="t" style="left:276px;top:283px;line-height:24px;font-size:11px;color:#b1b1b3;font-family:'Liberation Sans', sans-serif;;letter-spacing:0.334px">popper.min.js</div>
<div class="t" style="left:612px;top:283px;line-height:24px;font-size:11px;color:#b1b1b3;font-family:'Liberation Sans', sans-serif;;letter-spacing:0.175px">script</div>
<div class="t" style="left:746px;top:283px;line-height:24px;font-size:11px;color:#b1b1b3;font-family:'Liberation Sans', sans-serif;;letter-spacing:0.159px">js</div>
<div class="t" style="left:813px;top:283px;line-height:24px;font-size:11px;color:#b1b1b3;font-family:'Liberation Sans', sans-serif;;letter-spacing:0.237px">cached</div>
<div class="t" style="left:948px;top:283px;line-height:24px;font-size:11px;color:#b1b1b3;font-family:'Liberation Sans', sans-serif;;letter-spacing:-0.465px">18.42 KB</div>
<div style="position:absolute;left:1px;top:306px;width:1007px;height:24px;background:#232327;"></div>
<div style="position:absolute;left:68px;top:306px;width:1px;height:24px;background:#38383d;"></div>
<div style="position:absolute;left:135px;top:306px;width:1px;height:24px;background:#38383d;"></div>
<div style="position:absolute;left:270px;top:306px;width:1px;height:24px;background:#38383d;"></div>
<div style="position:absolute;left:606px;top:306px;width:1px;height:24px;background:#38383d;"></div>
<div style="position:absolute;left:740px;top:306px;width:1px;height:24px;background:#38383d;"></div>
<div style="position:absolute;left:807px;top:306px;width:1px;height:24px;background:#38383d;"></div>
<div style="position:absolute;left:942px;top:306px;width:1px;height:24px;background:#38383d;"></div>
<div class="t" style="left:6px;top:309px;line-height:24px;font-size:10px;color:#b1b1b3;font-family:'Liberation Mono', monospace;width:22px;text-align:center">304</div>
<div class="t" style="left:74px;top:307px;line-height:24px;font-size:11px;color:#b1b1b3;font-family:'Liberation Sans', sans-serif;letter-spacing:-1px">GET</div>
<svg style="position:absolute;left:141px;top:311px;" width="10" height="14" viewBox="0 0 10 14"><path d="M2.2 6.5 V4.9 a2.8 2.8 0 0 1 5.6 0 V6.5" stroke="#88888c" stroke-width="1.7" fill="none"/><rect x="0" y="6" width="10" height="7.6" rx="0.8" fill="#88888c"/></svg>
<div class="t" style="left:156px;top:307px;line-height:24px;font-size:11px;color:#b1b1b3;font-family:'Liberation Sans', sans-serif;;letter-spacing:0.111px">k3bot.xyz</div>
<div class="t" style="left:276px;top:307px;line-height:24px;font-size:11px;color:#b1b1b3;font-family:'Liberation Sans', sans-serif;;letter-spacing:0.395px">bootstrap.min.js</div>
<div class="t" style="left:612px;top:307px;line-height:24px;font-size:11px;color:#b1b1b3;font-family:'Liberation Sans', sans-serif;;letter-spacing:0.175px">script</div>
<div class="t" style="left:746px;top:307px;line-height:24px;font-size:11px;color:#b1b1b3;font-family:'Liberation Sans', sans-serif;;letter-spacing:0.159px">js</div>
<div class="t" style="left:813px;top:307px;line-height:24px;font-size:11px;color:#b1b1b3;font-family:'Liberation Sans', sans-serif;;letter-spacing:0.237px">cached</div>
<div class="t" style="left:948px;top:307px;line-height:24px;font-size:11px;color:#b1b1b3;font-family:'Liberation Sans', sans-serif;;letter-spacing:-0.465px">58.33 KB</div>
<div style="position:absolute;left:1px;top:330px;width:1007px;height:24px;background:#2c2c31;"></div>
<div style="position:absolute;left:68px;top:330px;width:1px;height:24px;background:#38383d;"></div>
<div style="position:absolute;left:135px;top:330px;width:1px;height:24px;background:#38383d;"></div>
<div style="position:absolute;left:270px;top:330px;width:1px;height:24px;background:#38383d;"></div>
<div style="position:absolute;left:606px;top:330px;width:1px;height:24px;background:#38383d;"></div>
<div style="position:absolute;left:740px;top:330px;width:1px;height:24px;background:#38383d;"></div>
<div style="position:absolute;left:807px;top:330px;width:1px;height:24px;background:#38383d;"></div>
<div style="position:absolute;left:942px;top:330px;width:1px;height:24px;background:#38383d;"></div>
<div class="t" style="left:6px;top:333px;line-height:24px;font-size:10px;color:#b1b1b3;font-family:'Liberation Mono', monospace;width:22px;text-align:center">304</div>
<div class="t" style="left:74px;top:331px;line-height:24px;font-size:11px;color:#b1b1b3;font-family:'Liberation Sans', sans-serif;letter-spacing:-1px">GET</div>
<svg style="position:absolute;left:141px;top:335px;" width="10" height="14" viewBox="0 0 10 14"><path d="M2.2 6.5 V4.9 a2.8 2.8 0 0 1 5.6 0 V6.5" stroke="#88888c" stroke-width="1.7" fill="none"/><rect x="0" y="6" width="10" height="7.6" rx="0.8" fill="#88888c"/></svg>
<div class="t" style="left:156px;top:331px;line-height:24px;font-size:11px;color:#b1b1b3;font-family:'Liberation Sans', sans-serif;;letter-spacing:0.111px">k3bot.xyz</div>
<div class="t" style="left:276px;top:331px;line-height:24px;font-size:11px;color:#b1b1b3;font-family:'Liberation Sans', sans-serif;;letter-spacing:0.188px">slider.min.js</div>
<div class="t" style="left:612px;top:331px;line-height:24px;font-size:11px;color:#b1b1b3;font-family:'Liberation Sans', sans-serif;;letter-spacing:0.175px">script</div>
<div class="t" style="left:746px;top:331px;line-height:24px;font-size:11px;color:#b1b1b3;font-family:'Liberation Sans', sans-serif;;letter-spacing:0.159px">js</div>
<div class="t" style="left:813px;top:331px;line-height:24px;font-size:11px;color:#b1b1b3;font-family:'Liberation Sans', sans-serif;;letter-spacing:0.237px">cached</div>
<div class="t" style="left:948px;top:331px;line-height:24px;font-size:11px;color:#b1b1b3;font-family:'Liberation Sans', sans-serif;;letter-spacing:-0.489px">135.50 KB</div>
<div style="position:absolute;left:1px;top:354px;width:1007px;height:24px;background:#232327;"></div>
<div style="position:absolute;left:68px;top:354px;width:1px;height:24px;background:#38383d;"></div>
<div style="position:absolute;left:135px;top:354px;width:1px;height:24px;background:#38383d;"></div>
<div style="position:absolute;left:270px;top:354px;width:1px;height:24px;background:#38383d;"></div>
<div style="position:absolute;left:606px;top:354px;width:1px;height:24px;background:#38383d;"></div>
<div style="position:absolute;left:740px;top:354px;width:1px;height:24px;background:#38383d;"></div>
<div style="position:absolute;left:807px;top:354px;width:1px;height:24px;background:#38383d;"></div>
<div style="position:absolute;left:942px;top:354px;width:1px;height:24px;background:#38383d;"></div>
<div class="t" style="left:6px;top:357px;line-height:24px;font-size:10px;color:#b1b1b3;font-family:'Liberation Mono', monospace;width:22px;text-align:center">304</div>
<div class="t" style="left:74px;top:355px;line-height:24px;font-size:11px;color:#b1b1b3;font-family:'Liberation Sans', sans-serif;letter-spacing:-1px">GET</div>
<svg style="position:absolute;left:141px;top:359px;" width="10" height="14" viewBox="0 0 10 14"><path d="M2.2 6.5 V4.9 a2.8 2.8 0 0 1 5.6 0 V6.5" stroke="#88888c" stroke-width="1.7" fill="none"/><rect x="0" y="6" width="10" height="7.6" rx="0.8" fill="#88888c"/></svg>
<div class="t" style="left:156px;top:355px;line-height:24px;font-size:11px;color:#b1b1b3;font-family:'Liberation Sans', sans-serif;;letter-spacing:0.111px">k3bot.xyz</div>
<div class="t" style="left:276px;top:355px;line-height:24px;font-size:11px;color:#b1b1b3;font-family:'Liberation Sans', sans-serif;;letter-spacing:0.166px">gallery.min.js</div>
<div class="t" style="left:612px;top:355px;line-height:24px;font-size:11px;color:#b1b1b3;font-family:'Liberation Sans', sans-serif;;letter-spacing:0.175px">script</div>
<div class="t" style="left:746px;top:355px;line-height:24px;font-size:11px;color:#b1b1b3;font-family:'Liberation Sans', sans-serif;;letter-spacing:0.159px">js</div>
<div class="t" style="left:813px;top:355px;line-height:24px;font-size:11px;color:#b1b1b3;font-family:'Liberation Sans', sans-serif;;letter-spacing:0.237px">cached</div>
<div class="t" style="left:948px;top:355px;line-height:24px;font-size:11px;color:#b1b1b3;font-family:'Liberation Sans', sans-serif;;letter-spacing:-0.465px">48.59 KB</div>
<div style="position:absolute;left:1px;top:378px;width:1007px;height:24px;background:#2c2c31;"></div>
<div style="position:absolute;left:68px;top:378px;width:1px;height:24px;background:#38383d;"></div>
<div style="position:absolute;left:135px;top:378px;width:1px;height:24px;background:#38383d;"></div>
<div style="position:absolute;left:270px;top:378px;width:1px;height:24px;background:#38383d;"></div>
<div style="position:absolute;left:606px;top:378px;width:1px;height:24px;background:#38383d;"></div>
<div style="position:absolute;left:740px;top:378px;width:1px;height:24px;background:#38383d;"></div>
<div style="position:absolute;left:807px;top:378px;width:1px;height:24px;background:#38383d;"></div>
<div style="position:absolute;left:942px;top:378px;width:1px;height:24px;background:#38383d;"></div>
<div class="t" style="left:6px;top:381px;line-height:24px;font-size:10px;color:#b1b1b3;font-family:'Liberation Mono', monospace;width:22px;text-align:center">304</div>
<div class="t" style="left:74px;top:379px;line-height:24px;font-size:11px;color:#b1b1b3;font-family:'Liberation Sans', sans-serif;letter-spacing:-1px">GET</div>
<svg style="position:absolute;left:141px;top:383px;" width="10" height="14" viewBox="0 0 10 14"><path d="M2.2 6.5 V4.9 a2.8 2.8 0 0 1 5.6 0 V6.5" stroke="#88888c" stroke-width="1.7" fill="none"/><rect x="0" y="6" width="10" height="7.6" rx="0.8" fill="#88888c"/></svg>
<div class="t" style="left:156px;top:379px;line-height:24px;font-size:11px;color:#b1b1b3;font-family:'Liberation Sans', sans-serif;;letter-spacing:0.111px">k3bot.xyz</div>
<div class="t" style="left:276px;top:379px;line-height:24px;font-size:11px;color:#b1b1b3;font-family:'Liberation Sans', sans-serif;;letter-spacing:0.281px">animation.min.js</div>
<div class="t" style="left:612px;top:379px;line-height:24px;font-size:11px;color:#b1b1b3;font-family:'Liberation Sans', sans-serif;;letter-spacing:0.175px">script</div>
<div class="t" style="left:746px;top:379px;line-height:24px;font-size:11px;color:#b1b1b3;font-family:'Liberation Sans', sans-serif;;letter-spacing:0.159px">js</div>
<div class="t" style="left:813px;top:379px;line-height:24px;font-size:11px;color:#b1b1b3;font-family:'Liberation Sans', sans-serif;;letter-spacing:0.237px">cached</div>
<div class="t" style="left:948px;top:379px;line-height:24px;font-size:11px;color:#b1b1b3;font-family:'Liberation Sans', sans-serif;;letter-spacing:-0.465px">14.18 KB</div>
<div style="position:absolute;left:1px;top:402px;width:1007px;height:24px;background:#232327;"></div>
<div style="position:absolute;left:68px;top:402px;width:1px;height:24px;background:#38383d;"></div>
<div style="position:absolute;left:135px;top:402px;width:1px;height:24px;background:#38383d;"></div>
<div style="position:absolute;left:270px;top:402px;width:1px;height:24px;background:#38383d;"></div>
<div style="position:absolute;left:606px;top:402px;width:1px;height:24px;background:#38383d;"></div>
<div style="position:absolute;left:740px;top:402px;width:1px;height:24px;background:#38383d;"></div>
<div style="position:absolute;left:807px;top:402px;width:1px;height:24px;background:#38383d;"></div>
<div style="position:absolute;left:942px;top:402px;width:1px;height:24px;background:#38383d;"></div>
<div class="t" style="left:6px;top:405px;line-height:24px;font-size:10px;color:#b1b1b3;font-family:'Liberation Mono', monospace;width:22px;text-align:center">304</div>
<div class="t" style="left:74px;top:403px;line-height:24px;font-size:11px;color:#b1b1b3;font-family:'Liberation Sans', sans-serif;letter-spacing:-1px">GET</div>
<svg style="position:absolute;left:141px;top:407px;" width="10" height="14" viewBox="0 0 10 14"><path d="M2.2 6.5 V4.9 a2.8 2.8 0 0 1 5.6 0 V6.5" stroke="#88888c" stroke-width="1.7" fill="none"/><rect x="0" y="6" width="10" height="7.6" rx="0.8" fill="#88888c"/></svg>
<div class="t" style="left:156px;top:403px;line-height:24px;font-size:11px;color:#b1b1b3;font-family:'Liberation Sans', sans-serif;;letter-spacing:0.111px">k3bot.xyz</div>
<div class="t" style="left:276px;top:403px;line-height:24px;font-size:11px;color:#b1b1b3;font-family:'Liberation Sans', sans-serif;;letter-spacing:0.134px">particles.min.js</div>
<div class="t" style="left:612px;top:403px;line-height:24px;font-size:11px;color:#b1b1b3;font-family:'Liberation Sans', sans-serif;;letter-spacing:0.175px">script</div>
<div class="t" style="left:746px;top:403px;line-height:24px;font-size:11px;color:#b1b1b3;font-family:'Liberation Sans', sans-serif;;letter-spacing:0.159px">js</div>
<div class="t" style="left:813px;top:403px;line-height:24px;font-size:11px;color:#b1b1b3;font-family:'Liberation Sans', sans-serif;;letter-spacing:0.237px">cached</div>
<div class="t" style="left:948px;top:403px;line-height:24px;font-size:11px;color:#b1b1b3;font-family:'Liberation Sans', sans-serif;;letter-spacing:-0.465px">23.31 KB</div>
<div style="position:absolute;left:1px;top:426px;width:1007px;height:24px;background:#2c2c31;"></div>
<div style="position:absolute;left:68px;top:426px;width:1px;height:24px;background:#38383d;"></div>
<div style="position:absolute;left:135px;top:426px;width:1px;height:24px;background:#38383d;"></div>
<div style="position:absolute;left:270px;top:426px;width:1px;height:24px;background:#38383d;"></div>
<div style="position:absolute;left:606px;top:426px;width:1px;height:24px;background:#38383d;"></div>
<div style="position:absolute;left:740px;top:426px;width:1px;height:24px;background:#38383d;"></div>
<div style="position:absolute;left:807px;top:426px;width:1px;height:24px;background:#38383d;"></div>
<div style="position:absolute;left:942px;top:426px;width:1px;height:24px;background:#38383d;"></div>
<div class="t" style="left:6px;top:429px;line-height:24px;font-size:10px;color:#b1b1b3;font-family:'Liberation Mono', monospace;width:22px;text-align:center">304</div>
<div class="t" style="left:74px;top:427px;line-height:24px;font-size:11px;color:#b1b1b3;font-family:'Liberation Sans', sans-serif;letter-spacing:-1px">GET</div>
<svg style="position:absolute;left:141px;top:431px;" width="10" height="14" viewBox="0 0 10 14"><path d="M2.2 6.5 V4.9 a2.8 2.8 0 0 1 5.6 0 V6.5" stroke="#88888c" stroke-width="1.7" fill="none"/><rect x="0" y="6" width="10" height="7.6" rx="0.8" fill="#88888c"/></svg>
<div class="t" style="left:156px;top:427px;line-height:24px;font-size:11px;color:#b1b1b3;font-family:'Liberation Sans', sans-serif;;letter-spacing:0.111px">k3bot.xyz</div>
<div class="t" style="left:276px;top:427px;line-height:24px;font-size:11px;color:#b1b1b3;font-family:'Liberation Sans', sans-serif;;letter-spacing:0.158px">typed.js</div>
<div class="t" style="left:612px;top:427px;line-height:24px;font-size:11px;color:#b1b1b3;font-family:'Liberation Sans', sans-serif;;letter-spacing:0.175px">script</div>
<div class="t" style="left:746px;top:427px;line-height:24px;font-size:11px;color:#b1b1b3;font-family:'Liberation Sans', sans-serif;;letter-spacing:0.159px">js</div>
<div class="t" style="left:813px;top:427px;line-height:24px;font-size:11px;color:#b1b1b3;font-family:'Liberation Sans', sans-serif;;letter-spacing:0.237px">cached</div>
<div class="t" style="left:948px;top:427px;line-height:24px;font-size:11px;color:#b1b1b3;font-family:'Liberation Sans', sans-serif;;letter-spacing:-0.364px">11.37 KB</div>
<div style="position:absolute;left:1px;top:450px;width:1007px;height:24px;background:#232327;"></div>
<div style="position:absolute;left:68px;top:450px;width:1px;height:24px;background:#38383d;"></div>
<div style="position:absolute;left:135px;top:450px;width:1px;height:24px;background:#38383d;"></div>
<div style="position:absolute;left:270px;top:450px;width:1px;height:24px;background:#38383d;"></div>
<div style="position:absolute;left:606px;top:450px;width:1px;height:24px;background:#38383d;"></div>
<div style="position:absolute;left:740px;top:450px;width:1px;height:24px;background:#38383d;"></div>
<div style="position:absolute;left:807px;top:450px;width:1px;height:24px;background:#38383d;"></div>
<div style="position:absolute;left:942px;top:450px;width:1px;height:24px;background:#38383d;"></div>
<div class="t" style="left:6px;top:453px;line-height:24px;font-size:10px;color:#b1b1b3;font-family:'Liberation Mono', monospace;width:22px;text-align:center">304</div>
<div class="t" style="left:74px;top:451px;line-height:24px;font-size:11px;color:#b1b1b3;font-family:'Liberation Sans', sans-serif;letter-spacing:-1px">GET</div>
<svg style="position:absolute;left:141px;top:455px;" width="10" height="14" viewBox="0 0 10 14"><path d="M2.2 6.5 V4.9 a2.8 2.8 0 0 1 5.6 0 V6.5" stroke="#88888c" stroke-width="1.7" fill="none"/><rect x="0" y="6" width="10" height="7.6" rx="0.8" fill="#88888c"/></svg>
<div class="t" style="left:156px;top:451px;line-height:24px;font-size:11px;color:#b1b1b3;font-family:'Liberation Sans', sans-serif;;letter-spacing:0.111px">k3bot.xyz</div>
<div class="t" style="left:276px;top:451px;line-height:24px;font-size:11px;color:#b1b1b3;font-family:'Liberation Sans', sans-serif;;letter-spacing:0.058px">custom_script.js</div>
<div class="t" style="left:612px;top:451px;line-height:24px;font-size:11px;color:#b1b1b3;font-family:'Liberation Sans', sans-serif;;letter-spacing:0.175px">script</div>
<div class="t" style="left:746px;top:451px;line-height:24px;font-size:11px;color:#b1b1b3;font-family:'Liberation Sans', sans-serif;;letter-spacing:0.159px">js</div>
<div class="t" style="left:813px;top:451px;line-height:24px;font-size:11px;color:#b1b1b3;font-family:'Liberation Sans', sans-serif;;letter-spacing:0.237px">cached</div>
<div class="t" style="left:948px;top:451px;line-height:24px;font-size:11px;color:#b1b1b3;font-family:'Liberation Sans', sans-serif;;letter-spacing:-0.465px">10.78 KB</div>
<div style="position:absolute;left:1px;top:474px;width:1007px;height:24px;background:#2c2c31;"></div>
<div style="position:absolute;left:68px;top:474px;width:1px;height:24px;background:#38383d;"></div>
<div style="position:absolute;left:135px;top:474px;width:1px;height:24px;background:#38383d;"></div>
<div style="position:absolute;left:270px;top:474px;width:1px;height:24px;background:#38383d;"></div>
<div style="position:absolute;left:606px;top:474px;width:1px;height:24px;background:#38383d;"></div>
<div style="position:absolute;left:740px;top:474px;width:1px;height:24px;background:#38383d;"></div>
<div style="position:absolute;left:807px;top:474px;width:1px;height:24px;background:#38383d;"></div>
<div style="position:absolute;left:942px;top:474px;width:1px;height:24px;background:#38383d;"></div>
<div class="t" style="left:6px;top:477px;line-height:24px;font-size:10px;color:#b1b1b3;font-family:'Liberation Mono', monospace;width:22px;text-align:center">304</div>
<div class="t" style="left:74px;top:475px;line-height:24px;font-size:11px;color:#b1b1b3;font-family:'Liberation Sans', sans-serif;letter-spacing:-1px">GET</div>
<svg style="position:absolute;left:141px;top:479px;" width="10" height="14" viewBox="0 0 10 14"><path d="M2.2 6.5 V4.9 a2.8 2.8 0 0 1 5.6 0 V6.5" stroke="#88888c" stroke-width="1.7" fill="none"/><rect x="0" y="6" width="10" height="7.6" rx="0.8" fill="#88888c"/></svg>
<div class="t" style="left:156px;top:475px;line-height:24px;font-size:11px;color:#b1b1b3;font-family:'Liberation Sans', sans-serif;;letter-spacing:0.111px">k3bot.xyz</div>
<div class="t" style="left:276px;top:475px;line-height:24px;font-size:11px;color:#b1b1b3;font-family:'Liberation Sans', sans-serif;;letter-spacing:0.661px">logonew.png</div>
<div class="t" style="left:612px;top:475px;line-height:24px;font-size:11px;color:#b1b1b3;font-family:'Liberation Sans', sans-serif;;letter-spacing:0.236px">img</div>
<div class="t" style="left:746px;top:475px;line-height:24px;font-size:11px;color:#b1b1b3;font-family:'Liberation Sans', sans-serif;;letter-spacing:0.245px">png</div>
<div class="t" style="left:813px;top:475px;line-height:24px;font-size:11px;color:#b1b1b3;font-family:'Liberation Sans', sans-serif;;letter-spacing:0.237px">cached</div>
<div class="t" style="left:948px;top:475px;line-height:24px;font-size:11px;color:#b1b1b3;font-family:'Liberation Sans', sans-serif;;letter-spacing:-0.465px">28.87 KB</div>
<div style="position:absolute;left:1px;top:498px;width:1007px;height:24px;background:#232327;"></div>
<div style="position:absolute;left:68px;top:498px;width:1px;height:24px;background:#38383d;"></div>
<div style="position:absolute;left:135px;top:498px;width:1px;height:24px;background:#38383d;"></div>
<div style="position:absolute;left:270px;top:498px;width:1px;height:24px;background:#38383d;"></div>
<div style="position:absolute;left:606px;top:498px;width:1px;height:24px;background:#38383d;"></div>
<div style="position:absolute;left:740px;top:498px;width:1px;height:24px;background:#38383d;"></div>
<div style="position:absolute;left:807px;top:498px;width:1px;height:24px;background:#38383d;"></div>
<div style="position:absolute;left:942px;top:498px;width:1px;height:24px;background:#38383d;"></div>
<div class="t" style="left:6px;top:501px;line-height:24px;font-size:10px;color:#b1b1b3;font-family:'Liberation Mono', monospace;width:22px;text-align:center">304</div>
<div class="t" style="left:74px;top:499px;line-height:24px;font-size:11px;color:#b1b1b3;font-family:'Liberation Sans', sans-serif;letter-spacing:-1px">GET</div>
<svg style="position:absolute;left:141px;top:503px;" width="10" height="14" viewBox="0 0 10 14"><path d="M2.2 6.5 V4.9 a2.8 2.8 0 0 1 5.6 0 V6.5" stroke="#88888c" stroke-width="1.7" fill="none"/><rect x="0" y="6" width="10" height="7.6" rx="0.8" fill="#88888c"/></svg>
<div class="t" style="left:156px;top:499px;line-height:24px;font-size:11px;color:#b1b1b3;font-family:'Liberation Sans', sans-serif;;letter-spacing:0.111px">k3bot.xyz</div>
<div class="t" style="left:276px;top:499px;line-height:24px;font-size:11px;color:#b1b1b3;font-family:'Liberation Sans', sans-serif;;letter-spacing:0.142px">Icons-Lineb26c.html</div>
<div class="t" style="left:612px;top:499px;line-height:24px;font-size:11px;color:#b1b1b3;font-family:'Liberation Sans', sans-serif;;letter-spacing:0.184px">font</div>
<div class="t" style="left:746px;top:499px;line-height:24px;font-size:11px;color:#b1b1b3;font-family:'Liberation Sans', sans-serif;;letter-spacing:0.208px">html</div>
<div class="t" style="left:813px;top:499px;line-height:24px;font-size:11px;color:#b1b1b3;font-family:'Liberation Sans', sans-serif;;letter-spacing:0.237px">cached</div>
<div class="t" style="left:948px;top:499px;line-height:24px;font-size:11px;color:#b1b1b3;font-family:'Liberation Sans', sans-serif;;letter-spacing:-0.465px">29.36 KB</div>
<div style="position:absolute;left:1px;top:522px;width:1007px;height:24px;background:#2c2c31;"></div>
<div style="position:absolute;left:68px;top:522px;width:1px;height:24px;background:#38383d;"></div>
<div style="position:absolute;left:135px;top:522px;width:1px;height:24px;background:#38383d;"></div>
<div style="position:absolute;left:270px;top:522px;width:1px;height:24px;background:#38383d;"></div>
<div style="position:absolute;left:606px;top:522px;width:1px;height:24px;background:#38383d;"></div>
<div style="position:absolute;left:740px;top:522px;width:1px;height:24px;background:#38383d;"></div>
<div style="position:absolute;left:807px;top:522px;width:1px;height:24px;background:#38383d;"></div>
<div style="position:absolute;left:942px;top:522px;width:1px;height:24px;background:#38383d;"></div>
<div class="t" style="left:6px;top:525px;line-height:24px;font-size:10px;color:#b1b1b3;font-family:'Liberation Mono', monospace;width:22px;text-align:center">304</div>
<div class="t" style="left:74px;top:523px;line-height:24px;font-size:11px;color:#b1b1b3;font-family:'Liberation Sans', sans-serif;letter-spacing:-1px">GET</div>
<svg style="position:absolute;left:141px;top:527px;" width="10" height="14" viewBox="0 0 10 14"><path d="M2.2 6.5 V4.9 a2.8 2.8 0 0 1 5.6 0 V6.5" stroke="#88888c" stroke-width="1.7" fill="none"/><rect x="0" y="6" width="10" height="7.6" rx="0.8" fill="#88888c"/></svg>
<div class="t" style="left:156px;top:523px;line-height:24px;font-size:11px;color:#b1b1b3;font-family:'Liberation Sans', sans-serif;;letter-spacing:0.111px">k3bot.xyz</div>
<div class="t" style="left:276px;top:523px;line-height:24px;font-size:11px;color:#b1b1b3;font-family:'Liberation Sans', sans-serif;;letter-spacing:0.477px">landingpage.jpg</div>
<div class="t" style="left:612px;top:523px;line-height:24px;font-size:11px;color:#b1b1b3;font-family:'Liberation Sans', sans-serif;;letter-spacing:0.236px">img</div>
<div class="t" style="left:746px;top:523px;line-height:24px;font-size:11px;color:#b1b1b3;font-family:'Liberation Sans', sans-serif;;letter-spacing:0.208px">jpeg</div>
<div class="t" style="left:813px;top:523px;line-height:24px;font-size:11px;color:#b1b1b3;font-family:'Liberation Sans', sans-serif;;letter-spacing:0.237px">cached</div>
<div class="t" style="left:948px;top:523px;line-height:24px;font-size:11px;color:#b1b1b3;font-family:'Liberation Sans', sans-serif;;letter-spacing:-0.436px">8.07 KB</div>
<div style="position:absolute;left:1px;top:546px;width:1007px;height:24px;background:#232327;"></div>
<div style="position:absolute;left:68px;top:546px;width:1px;height:24px;background:#38383d;"></div>
<div style="position:absolute;left:135px;top:546px;width:1px;height:24px;background:#38383d;"></div>
<div style="position:absolute;left:270px;top:546px;width:1px;height:24px;background:#38383d;"></div>
<div style="position:absolute;left:606px;top:546px;width:1px;height:24px;background:#38383d;"></div>
<div style="position:absolute;left:740px;top:546px;width:1px;height:24px;background:#38383d;"></div>
<div style="position:absolute;left:807px;top:546px;width:1px;height:24px;background:#38383d;"></div>
<div style="position:absolute;left:942px;top:546px;width:1px;height:24px;background:#38383d;"></div>
<div class="t" style="left:6px;top:549px;line-height:24px;font-size:10px;color:#b1b1b3;font-family:'Liberation Mono', monospace;width:22px;text-align:center">304</div>
<div class="t" style="left:74px;top:547px;line-height:24px;font-size:11px;color:#b1b1b3;font-family:'Liberation Sans', sans-serif;letter-spacing:-1px">GET</div>
<svg style="position:absolute;left:141px;top:551px;" width="10" height="14" viewBox="0 0 10 14"><path d="M2.2 6.5 V4.9 a2.8 2.8 0 0 1 5.6 0 V6.5" stroke="#88888c" stroke-width="1.7" fill="none"/><rect x="0" y="6" width="10" height="7.6" rx="0.8" fill="#88888c"/></svg>
<div class="t" style="left:156px;top:547px;line-height:24px;font-size:11px;color:#b1b1b3;font-family:'Liberation Sans', sans-serif;;letter-spacing:0.205px">cdn.discordapp.com</div>
<div class="t" style="left:276px;top:547px;line-height:24px;font-size:11px;color:#b1b1b3;font-family:'Liberation Sans', sans-serif;;letter-spacing:0.682px">unknown.png</div>
<div class="t" style="left:612px;top:547px;line-height:24px;font-size:11px;color:#b1b1b3;font-family:'Liberation Sans', sans-serif;;letter-spacing:0.236px">img</div>
<div class="t" style="left:746px;top:547px;line-height:24px;font-size:11px;color:#b1b1b3;font-family:'Liberation Sans', sans-serif;;letter-spacing:0.245px">png</div>
<div class="t" style="left:813px;top:547px;line-height:24px;font-size:11px;color:#b1b1b3;font-family:'Liberation Sans', sans-serif;;letter-spacing:0.237px">cached</div>
<div class="t" style="left:948px;top:547px;line-height:24px;font-size:11px;color:#b1b1b3;font-family:'Liberation Sans', sans-serif;;letter-spacing:-0.465px">20.36 KB</div>
<div style="position:absolute;left:1px;top:570px;width:1007px;height:24px;background:#2c2c31;"></div>
<div style="position:absolute;left:68px;top:570px;width:1px;height:24px;background:#38383d;"></div>
<div style="position:absolute;left:135px;top:570px;width:1px;height:24px;background:#38383d;"></div>
<div style="position:absolute;left:270px;top:570px;width:1px;height:24px;background:#38383d;"></div>
<div style="position:absolute;left:606px;top:570px;width:1px;height:24px;background:#38383d;"></div>
<div style="position:absolute;left:740px;top:570px;width:1px;height:24px;background:#38383d;"></div>
<div style="position:absolute;left:807px;top:570px;width:1px;height:24px;background:#38383d;"></div>
<div style="position:absolute;left:942px;top:570px;width:1px;height:24px;background:#38383d;"></div>
<div style="position:absolute;left:6px;top:577px;width:22px;height:13px;background:#86de74;border-radius:3px"></div>
<div class="t" style="left:6px;top:573px;line-height:24px;font-size:10px;color:#0c0c0d;font-family:'Liberation Mono', monospace;width:22px;text-align:center">200</div>
<div class="t" style="left:74px;top:571px;line-height:24px;font-size:11px;color:#b1b1b3;font-family:'Liberation Sans', sans-serif;letter-spacing:-1px">GET</div>
<svg style="position:absolute;left:141px;top:575px;" width="10" height="14" viewBox="0 0 10 14"><path d="M2.2 6.5 V4.9 a2.8 2.8 0 0 1 5.6 0 V6.5" stroke="#88888c" stroke-width="1.7" fill="none"/><rect x="0" y="6" width="10" height="7.6" rx="0.8" fill="#88888c"/></svg>
<div class="t" style="left:156px;top:571px;line-height:24px;font-size:11px;color:#b1b1b3;font-family:'Liberation Sans', sans-serif;;letter-spacing:0.111px">k3bot.xyz</div>
<div class="t" style="left:276px;top:571px;line-height:24px;font-size:11px;color:#b1b1b3;font-family:'Liberation Sans', sans-serif;;letter-spacing:0.661px">logonew.png</div>
<div class="t" style="left:612px;top:571px;line-height:24px;font-size:11px;color:#4fa8ff;font-family:'Liberation Sans', sans-serif;;letter-spacing:0.032px">FaviconLoader.jsm:191...</div>
<div class="t" style="left:746px;top:571px;line-height:24px;font-size:11px;color:#b1b1b3;font-family:'Liberation Sans', sans-serif;;letter-spacing:0.245px">png</div>
<div class="t" style="left:813px;top:571px;line-height:24px;font-size:11px;color:#b1b1b3;font-family:'Liberation Sans', sans-serif;;letter-spacing:0.237px">cached</div>
<div class="t" style="left:948px;top:571px;line-height:24px;font-size:11px;color:#b1b1b3;font-family:'Liberation Sans', sans-serif;;letter-spacing:-0.465px">28.87 KB</div>
<div style="position:absolute;left:1px;top:846px;width:1007px;height:1px;background:#38383d;"></div>
<div style="position:absolute;left:1px;top:847px;width:1007px;height:24px;background:#18181a;"></div>
<div style="position:absolute;left:5px;top:849px;width:26px;height:20px;background:#38383d;border-radius:3px"></div>
<svg style="position:absolute;left:10px;top:851px;" width="16" height="16" viewBox="0 0 16 16"><rect x="6" y="0.5" width="4" height="2" fill="#b1b1b3"/><circle cx="8" cy="9.5" r="5.5" stroke="#b1b1b3" stroke-width="1.5" fill="none"/><path d="M8 9.5 L10.5 7" stroke="#b1b1b3" stroke-width="1"/><circle cx="8" cy="9.5" r="1" fill="#b1b1b3"/></svg>
<div class="t" style="left:42px;top:848px;line-height:24px;font-size:11px;color:#b1b1b3;font-family:'Liberation Sans', sans-serif;;letter-spacing:0.134px">20 requests</div>
<div style="position:absolute;left:111px;top:851px;width:1px;height:16px;background:#38383d;"></div>
<div class="t" style="left:122px;top:848px;line-height:24px;font-size:11px;color:#b1b1b3;font-family:'Liberation Sans', sans-serif;;letter-spacing:-0.068px">559.51 KB / 4.61 KB transferred</div>
<div style="position:absolute;left:286px;top:851px;width:1px;height:16px;background:#38383d;"></div>
<div class="t" style="left:297.5px;top:848px;line-height:24px;font-size:11px;color:#b1b1b3;font-family:'Liberation Sans', sans-serif;;letter-spacing:-0.033px">Finish: 1.43 s</div>
<div style="position:absolute;left:373px;top:851px;width:1px;height:16px;background:#38383d;"></div>
<div class="t" style="left:384px;top:848px;line-height:24px;font-size:11px;color:#75bfff;font-family:'Liberation Sans', sans-serif;;letter-spacing:0.180px">DOMContentLoaded: 972 ms</div>
<div style="position:absolute;left:542px;top:851px;width:1px;height:16px;background:#38383d;"></div>
<div class="t" style="left:553px;top:848px;line-height:24px;font-size:11px;color:#ff7de9;font-family:'Liberation Sans', sans-serif;;letter-spacing:0.047px">load: 1.43 s</div>
<div style="position:absolute;left:1008px;top:89px;width:1px;height:782px;background:#38383d;"></div>
<div style="position:absolute;left:1009px;top:89px;width:550px;height:782px;background:#18181a;"></div>
<div style="position:absolute;left:1009px;top:89px;width:550px;height:24px;background:#0c0c0d;"></div>
<div style="position:absolute;left:1009px;top:113px;width:550px;height:1px;background:#38383d;"></div>
<svg style="position:absolute;left:1015px;top:95px;" width="16" height="14" viewBox="0 0 16 14"><rect x="1.5" y="1.5" width="13" height="11" stroke="#d7d7db" stroke-width="1" fill="none"/><path d="M11.5 1.5 V12.5" stroke="#d7d7db" stroke-width="1" fill="none"/><rect x="12" y="2" width="2" height="10" fill="#444"/><path d="M4.2 4.2 L8.3 7 L4.2 9.8 Z" stroke="#d7d7db" stroke-width="1" fill="none" stroke-linejoin="round"/></svg>
<div style="position:absolute;left:1037px;top:89px;width:64px;height:2px;background:#0a84ff;"></div>
<div class="t" style="left:1048px;top:90px;line-height:24px;font-size:11.5px;color:#fff;font-family:'Liberation Sans', sans-serif;">Headers</div>
<div class="t" style="left:1113px;top:90px;line-height:24px;font-size:11.5px;color:#d7d7db;font-family:'Liberation Sans', sans-serif;">Cookies</div>
<div class="t" style="left:1177px;top:90px;line-height:24px;font-size:11.5px;color:#d7d7db;font-family:'Liberation Sans', sans-serif;">Request</div>
<div class="t" style="left:1241px;top:90px;line-height:24px;font-size:11.5px;color:#d7d7db;font-family:'Liberation Sans', sans-serif;">Response</div>
<div class="t" style="left:1312px;top:90px;line-height:24px;font-size:11.5px;color:#d7d7db;font-family:'Liberation Sans', sans-serif;">Timings</div>
<div class="t" style="left:1377px;top:90px;line-height:24px;font-size:11.5px;color:#d7d7db;font-family:'Liberation Sans', sans-serif;">Security</div>
<div style="position:absolute;left:1009px;top:114px;width:550px;height:24px;background:#232327;"></div>
<div style="position:absolute;left:1009px;top:138px;width:550px;height:1px;background:#38383d;"></div>
<svg style="position:absolute;left:1018px;top:120px;" width="11" height="13" viewBox="0 0 11 13"><path d="M4.5 5.5 H6.5 V12 L4.5 10.5 Z" fill="#6a6a6e"/><path d="M0.8 1 H10.2 L6.5 5.5 V12 L4.5 10.5 V5.5 Z" stroke="#939395" stroke-width="1" fill="none" stroke-linejoin="round"/></svg>
<div class="t" style="left:1032px;top:115px;line-height:24px;font-size:11px;color:#939395;font-family:'Liberation Sans', sans-serif;;letter-spacing:0.074px">Filter Headers</div>
<div style="position:absolute;left:1470px;top:117px;width:1px;height:18px;background:#38383d;"></div>
<div class="t" style="left:1473px;top:115px;line-height:24px;font-size:11px;color:#d7d7db;font-family:'Liberation Sans', sans-serif;;letter-spacing:0.054px">Block</div>
<div style="position:absolute;left:1502px;top:117px;width:1px;height:18px;background:#38383d;"></div>
<div class="t" style="left:1507px;top:115px;line-height:24px;font-size:11px;color:#d7d7db;font-family:'Liberation Sans', sans-serif;;letter-spacing:0.107px">Resend</div>
<svg style="position:absolute;left:1548px;top:120px;" width="7" height="11" viewBox="0 0 7 11"><path d="M0.5 4.5 L3.5 1 L6.5 4.5 Z M0.5 6.5 L3.5 10 L6.5 6.5 Z" fill="#b1b1b3"/></svg>
<svg style="position:absolute;left:1017px;top:151px;" width="7" height="10" viewBox="0 0 7 10"><path d="M1 0.5 L6 5 L1 9.5 Z" fill="#939395"/></svg>
<div class="t" style="left:1029px;top:145px;line-height:24px;font-size:11px;color:#b1b1b3;font-family:'Liberation Sans', sans-serif;;letter-spacing:-0.875px">GET</div>
<div class="t" style="left:1054.5px;top:145px;line-height:24px;font-size:11px;color:#b1b1b3;font-family:'Liberation Sans', sans-serif;;letter-spacing:0.193px">https://k3bot.xyz/gtag/js.js?<span style="color:#75bfff">id</span>=G-F32N8CB24Q</div>
<div style="position:absolute;left:1009px;top:173px;width:550px;height:1px;background:#38383d;"></div>
<div class="t" style="left:1029px;top:178px;line-height:24px;font-size:11px;color:#939395;font-family:'Liberation Sans', sans-serif;;letter-spacing:0.073px">Status</div>
<div class="t" style="left:1029px;top:201px;line-height:24px;font-size:11px;color:#939395;font-family:'Liberation Sans', sans-serif;;letter-spacing:0.185px">Version</div>
<div class="t" style="left:1029px;top:221px;line-height:24px;font-size:11px;color:#939395;font-family:'Liberation Sans', sans-serif;;letter-spacing:0.177px">Transferred</div>
<div class="t" style="left:1029px;top:241px;line-height:24px;font-size:11px;color:#939395;font-family:'Liberation Sans', sans-serif;;letter-spacing:0.074px">Referrer Policy</div>
<div class="t" style="left:1122px;top:178px;line-height:24px;font-size:11px;color:#d86dff;font-family:'Liberation Sans', sans-serif;"><span style="font-family:&quot;Liberation Mono&quot;;letter-spacing:-0.3px">404</span> <span style="letter-spacing:0.45px">Not Found</span></div>
<svg style="position:absolute;left:1205px;top:184px;" width="14" height="14" viewBox="0 0 14 14"><circle cx="7" cy="7" r="6.2" stroke="#b1b1b3" stroke-width="1.2" fill="none"/><path d="M5 5.3 a2 2 0 1 1 3 1.7 q-1 0.6 -1 1.8" stroke="#b1b1b3" stroke-width="1.1" fill="none"/><rect x="6.4" y="9.6" width="1.3" height="1.3" fill="#b1b1b3"/></svg>
<div class="t" style="left:1122px;top:201px;line-height:24px;font-size:11px;color:#f9f9fa;font-family:'Liberation Sans', sans-serif;;letter-spacing:-0.401px">HTTP/2</div>
<div class="t" style="left:1122px;top:221px;line-height:24px;font-size:11px;color:#f9f9fa;font-family:'Liberation Sans', sans-serif;;letter-spacing:-0.309px">393 B (375 B size)</div>
<div class="t" style="left:1122px;top:241px;line-height:24px;font-size:11px;color:#f9f9fa;font-family:'Liberation Sans', sans-serif;;letter-spacing:0.427px">strict-origin-when-cross-origin</div>
<div style="position:absolute;left:1009px;top:267px;width:550px;height:1px;background:#38383d;"></div>
<div style="position:absolute;left:1009px;top:268px;width:550px;height:24px;background:#232327;"></div>
<div style="position:absolute;left:1009px;top:292px;width:550px;height:1px;background:#38383d;"></div>
<svg style="position:absolute;left:1015px;top:277px;" width="10" height="8" viewBox="0 0 10 8"><path d="M0.8 1 H9.2 L5 6.5 Z" fill="#939395"/></svg>
<div class="t" style="left:1029px;top:269px;line-height:24px;font-size:11px;color:#d7d7db;font-family:'Liberation Sans', sans-serif;;letter-spacing:0.043px">Response Headers (163 B)</div>
<div class="t" style="left:1500.5px;top:268px;line-height:24px;font-size:11px;color:#d7d7db;font-family:'Liberation Sans', sans-serif;;letter-spacing:-0.167px">Raw</div>
<div style="position:absolute;left:1526px;top:273px;width:26px;height:14px;background:#4a4a4f;border-radius:7px"></div>
<div style="position:absolute;left:1529px;top:276px;width:8px;height:8px;border-radius:4px;background:#b1b1b3"></div>
<svg style="position:absolute;left:1020px;top:296px;" width="14" height="14" viewBox="0 0 14 14"><circle cx="7" cy="7" r="6.3" stroke="#5c5c60" stroke-width="1.2" fill="none"/><path d="M5 5.3 a2 2 0 1 1 3 1.7 q-1 0.6 -1 1.8" stroke="#5c5c60" stroke-width="1.1" fill="none"/><rect x="6.4" y="9.6" width="1.3" height="1.3" fill="#5c5c60"/></svg>
<div class="t" style="left:1047px;top:293px;line-height:19px;font-size:11px;color:#75bfff;font-family:'Liberation Sans', sans-serif;;letter-spacing:0.469px">content-encoding:</div>
<div class="t" style="left:1150px;top:293px;line-height:19px;font-size:11px;color:#d7d7db;font-family:'Liberation Sans', sans-serif;;letter-spacing:0.359px">br</div>
<svg style="position:absolute;left:1020px;top:315px;" width="14" height="14" viewBox="0 0 14 14"><circle cx="7" cy="7" r="6.3" stroke="#5c5c60" stroke-width="1.2" fill="none"/><path d="M5 5.3 a2 2 0 1 1 3 1.7 q-1 0.6 -1 1.8" stroke="#5c5c60" stroke-width="1.1" fill="none"/><rect x="6.4" y="9.6" width="1.3" height="1.3" fill="#5c5c60"/></svg>
<div class="t" style="left:1047px;top:312px;line-height:19px;font-size:11px;color:#75bfff;font-family:'Liberation Sans', sans-serif;;letter-spacing:0.350px">content-type:</div>
<div class="t" style="left:1122px;top:312px;line-height:19px;font-size:11px;color:#d7d7db;font-family:'Liberation Sans', sans-serif;;letter-spacing:0.254px">text/html; charset=iso-8859-1</div>
<svg style="position:absolute;left:1020px;top:334px;" width="14" height="14" viewBox="0 0 14 14"><circle cx="7" cy="7" r="6.3" stroke="#5c5c60" stroke-width="1.2" fill="none"/><path d="M5 5.3 a2 2 0 1 1 3 1.7 q-1 0.6 -1 1.8" stroke="#5c5c60" stroke-width="1.1" fill="none"/><rect x="6.4" y="9.6" width="1.3" height="1.3" fill="#5c5c60"/></svg>
<div class="t" style="left:1047px;top:331px;line-height:19px;font-size:11px;color:#75bfff;font-family:'Liberation Sans', sans-serif;;letter-spacing:0.180px">date:</div>
<div class="t" style="left:1080px;top:331px;line-height:19px;font-size:11px;color:#d7d7db;font-family:'Liberation Sans', sans-serif;;letter-spacing:-0.131px">Sun, 05 Dec 2021 16:48:25 GMT</div>
<svg style="position:absolute;left:1020px;top:353px;" width="14" height="14" viewBox="0 0 14 14"><circle cx="7" cy="7" r="6.3" stroke="#5c5c60" stroke-width="1.2" fill="none"/><path d="M5 5.3 a2 2 0 1 1 3 1.7 q-1 0.6 -1 1.8" stroke="#5c5c60" stroke-width="1.1" fill="none"/><rect x="6.4" y="9.6" width="1.3" height="1.3" fill="#5c5c60"/></svg>
<div class="t" style="left:1047px;top:350px;line-height:19px;font-size:11px;color:#75bfff;font-family:'Liberation Sans', sans-serif;;letter-spacing:-0.118px">server:</div>
<div class="t" style="left:1087px;top:350px;line-height:19px;font-size:11px;color:#d7d7db;font-family:'Liberation Sans', sans-serif;;letter-spacing:0.458px">nginx</div>
<div class="t" style="left:1047px;top:369px;line-height:19px;font-size:11px;color:#75bfff;font-family:'Liberation Sans', sans-serif;;letter-spacing:0.018px">X-Firefox-Spdy:</div>
<div class="t" style="left:1130px;top:369px;line-height:19px;font-size:11px;color:#d7d7db;font-family:'Liberation Sans', sans-serif;;letter-spacing:0.275px">h2</div>
<div style="position:absolute;left:1009px;top:388px;width:550px;height:1px;background:#38383d;"></div>
<div style="position:absolute;left:1009px;top:389px;width:550px;height:24px;background:#232327;"></div>
<div style="position:absolute;left:1009px;top:413px;width:550px;height:1px;background:#38383d;"></div>
<svg style="position:absolute;left:1015px;top:398px;" width="10" height="8" viewBox="0 0 10 8"><path d="M0.8 1 H9.2 L5 6.5 Z" fill="#939395"/></svg>
<div class="t" style="left:1029px;top:390px;line-height:24px;font-size:11px;color:#d7d7db;font-family:'Liberation Sans', sans-serif;;letter-spacing:0.069px">Request Headers (404 B)</div>
<div class="t" style="left:1500.5px;top:389px;line-height:24px;font-size:11px;color:#d7d7db;font-family:'Liberation Sans', sans-serif;;letter-spacing:-0.167px">Raw</div>
<div style="position:absolute;left:1526px;top:394px;width:26px;height:14px;background:#4a4a4f;border-radius:7px"></div>
<div style="position:absolute;left:1529px;top:397px;width:8px;height:8px;border-radius:4px;background:#b1b1b3"></div>
<svg style="position:absolute;left:1020px;top:417px;" width="14" height="14" viewBox="0 0 14 14"><circle cx="7" cy="7" r="6.3" stroke="#5c5c60" stroke-width="1.2" fill="none"/><path d="M5 5.3 a2 2 0 1 1 3 1.7 q-1 0.6 -1 1.8" stroke="#5c5c60" stroke-width="1.1" fill="none"/><rect x="6.4" y="9.6" width="1.3" height="1.3" fill="#5c5c60"/></svg>
<div class="t" style="left:1047px;top:414px;line-height:19px;font-size:11px;color:#75bfff;font-family:'Liberation Sans', sans-serif;;letter-spacing:-0.046px">Accept:</div>
<div class="t" style="left:1090px;top:414px;line-height:19px;font-size:11px;color:#d7d7db;font-family:'Liberation Sans', sans-serif;;letter-spacing:0.625px">*/*</div>
<svg style="position:absolute;left:1020px;top:436px;" width="14" height="14" viewBox="0 0 14 14"><circle cx="7" cy="7" r="6.3" stroke="#5c5c60" stroke-width="1.2" fill="none"/><path d="M5 5.3 a2 2 0 1 1 3 1.7 q-1 0.6 -1 1.8" stroke="#5c5c60" stroke-width="1.1" fill="none"/><rect x="6.4" y="9.6" width="1.3" height="1.3" fill="#5c5c60"/></svg>
<div class="t" style="left:1047px;top:433px;line-height:19px;font-size:11px;color:#75bfff;font-family:'Liberation Sans', sans-serif;;letter-spacing:0.170px">Accept-Encoding:</div>
<div class="t" style="left:1144px;top:433px;line-height:19px;font-size:11px;color:#d7d7db;font-family:'Liberation Sans', sans-serif;;letter-spacing:0.301px">gzip, deflate, br</div>
<svg style="position:absolute;left:1020px;top:455px;" width="14" height="14" viewBox="0 0 14 14"><circle cx="7" cy="7" r="6.3" stroke="#5c5c60" stroke-width="1.2" fill="none"/><path d="M5 5.3 a2 2 0 1 1 3 1.7 q-1 0.6 -1 1.8" stroke="#5c5c60" stroke-width="1.1" fill="none"/><rect x="6.4" y="9.6" width="1.3" height="1.3" fill="#5c5c60"/></svg>
<div class="t" style="left:1047px;top:452px;line-height:19px;font-size:11px;color:#75bfff;font-family:'Liberation Sans', sans-serif;;letter-spacing:0.114px">Accept-Language:</div>
<div class="t" style="left:1145px;top:452px;line-height:19px;font-size:11px;color:#d7d7db;font-family:'Liberation Sans', sans-serif;;letter-spacing:0.150px">de-DE,en-US;q=0.7,en;q=0.3</div>
<svg style="position:absolute;left:1020px;top:474px;" width="14" height="14" viewBox="0 0 14 14"><circle cx="7" cy="7" r="6.3" stroke="#5c5c60" stroke-width="1.2" fill="none"/><path d="M5 5.3 a2 2 0 1 1 3 1.7 q-1 0.6 -1 1.8" stroke="#5c5c60" stroke-width="1.1" fill="none"/><rect x="6.4" y="9.6" width="1.3" height="1.3" fill="#5c5c60"/></svg>
<div class="t" style="left:1047px;top:471px;line-height:19px;font-size:11px;color:#75bfff;font-family:'Liberation Sans', sans-serif;;letter-spacing:0.171px">Cache-Control:</div>
<div class="t" style="left:1130px;top:471px;line-height:19px;font-size:11px;color:#d7d7db;font-family:'Liberation Sans', sans-serif;;letter-spacing:0.138px">max-age=0</div>
<svg style="position:absolute;left:1020px;top:493px;" width="14" height="14" viewBox="0 0 14 14"><circle cx="7" cy="7" r="6.3" stroke="#5c5c60" stroke-width="1.2" fill="none"/><path d="M5 5.3 a2 2 0 1 1 3 1.7 q-1 0.6 -1 1.8" stroke="#5c5c60" stroke-width="1.1" fill="none"/><rect x="6.4" y="9.6" width="1.3" height="1.3" fill="#5c5c60"/></svg>
<div class="t" style="left:1047px;top:490px;line-height:19px;font-size:11px;color:#75bfff;font-family:'Liberation Sans', sans-serif;;letter-spacing:0.277px">Connection:</div>
<div class="t" style="left:1116px;top:490px;line-height:19px;font-size:11px;color:#d7d7db;font-family:'Liberation Sans', sans-serif;;letter-spacing:0.184px">keep-alive</div>
<svg style="position:absolute;left:1020px;top:512px;" width="14" height="14" viewBox="0 0 14 14"><circle cx="7" cy="7" r="6.3" stroke="#5c5c60" stroke-width="1.2" fill="none"/><path d="M5 5.3 a2 2 0 1 1 3 1.7 q-1 0.6 -1 1.8" stroke="#5c5c60" stroke-width="1.1" fill="none"/><rect x="6.4" y="9.6" width="1.3" height="1.3" fill="#5c5c60"/></svg>
<div class="t" style="left:1047px;top:509px;line-height:19px;font-size:11px;color:#75bfff;font-family:'Liberation Sans', sans-serif;;letter-spacing:0.163px">Host:</div>
<div class="t" style="left:1080px;top:509px;line-height:19px;font-size:11px;color:#d7d7db;font-family:'Liberation Sans', sans-serif;;letter-spacing:0.144px">k3bot.xyz</div>
<svg style="position:absolute;left:1020px;top:531px;" width="14" height="14" viewBox="0 0 14 14"><circle cx="7" cy="7" r="6.3" stroke="#5c5c60" stroke-width="1.2" fill="none"/><path d="M5 5.3 a2 2 0 1 1 3 1.7 q-1 0.6 -1 1.8" stroke="#5c5c60" stroke-width="1.1" fill="none"/><rect x="6.4" y="9.6" width="1.3" height="1.3" fill="#5c5c60"/></svg>
<div class="t" style="left:1047px;top:528px;line-height:19px;font-size:11px;color:#75bfff;font-family:'Liberation Sans', sans-serif;;letter-spacing:-0.019px">Referer:</div>
<div class="t" style="left:1093px;top:528px;line-height:19px;font-size:11px;color:#d7d7db;font-family:'Liberation Sans', sans-serif;;letter-spacing:0.021px"><i>https://k3bot.xyz/</i></div>
<svg style="position:absolute;left:1020px;top:550px;" width="14" height="14" viewBox="0 0 14 14"><circle cx="7" cy="7" r="6.3" stroke="#5c5c60" stroke-width="1.2" fill="none"/><path d="M5 5.3 a2 2 0 1 1 3 1.7 q-1 0.6 -1 1.8" stroke="#5c5c60" stroke-width="1.1" fill="none"/><rect x="6.4" y="9.6" width="1.3" height="1.3" fill="#5c5c60"/></svg>
<div class="t" style="left:1047px;top:547px;line-height:19px;font-size:11px;color:#75bfff;font-family:'Liberation Sans', sans-serif;;letter-spacing:-0.100px">Sec-Fetch-Dest:</div>
<div class="t" style="left:1133px;top:547px;line-height:19px;font-size:11px;color:#d7d7db;font-family:'Liberation Sans', sans-serif;;letter-spacing:0.186px">script</div>
<svg style="position:absolute;left:1020px;top:569px;" width="14" height="14" viewBox="0 0 14 14"><circle cx="7" cy="7" r="6.3" stroke="#5c5c60" stroke-width="1.2" fill="none"/><path d="M5 5.3 a2 2 0 1 1 3 1.7 q-1 0.6 -1 1.8" stroke="#5c5c60" stroke-width="1.1" fill="none"/><rect x="6.4" y="9.6" width="1.3" height="1.3" fill="#5c5c60"/></svg>
<div class="t" style="left:1047px;top:566px;line-height:19px;font-size:11px;color:#75bfff;font-family:'Liberation Sans', sans-serif;;letter-spacing:0.053px">Sec-Fetch-Mode:</div>
<div class="t" style="left:1139px;top:566px;line-height:19px;font-size:11px;color:#d7d7db;font-family:'Liberation Sans', sans-serif;;letter-spacing:0.273px">no-cors</div>
<svg style="position:absolute;left:1020px;top:588px;" width="14" height="14" viewBox="0 0 14 14"><circle cx="7" cy="7" r="6.3" stroke="#5c5c60" stroke-width="1.2" fill="none"/><path d="M5 5.3 a2 2 0 1 1 3 1.7 q-1 0.6 -1 1.8" stroke="#5c5c60" stroke-width="1.1" fill="none"/><rect x="6.4" y="9.6" width="1.3" height="1.3" fill="#5c5c60"/></svg>
<div class="t" style="left:1047px;top:585px;line-height:19px;font-size:11px;color:#75bfff;font-family:'Liberation Sans', sans-serif;;letter-spacing:-0.110px">Sec-Fetch-Site:</div>
<div class="t" style="left:1128px;top:585px;line-height:19px;font-size:11px;color:#d7d7db;font-family:'Liberation Sans', sans-serif;;letter-spacing:0.312px">same-origin</div>
<svg style="position:absolute;left:1020px;top:607px;" width="14" height="14" viewBox="0 0 14 14"><circle cx="7" cy="7" r="6.3" stroke="#5c5c60" stroke-width="1.2" fill="none"/><path d="M5 5.3 a2 2 0 1 1 3 1.7 q-1 0.6 -1 1.8" stroke="#5c5c60" stroke-width="1.1" fill="none"/><rect x="6.4" y="9.6" width="1.3" height="1.3" fill="#5c5c60"/></svg>
<div class="t" style="left:1047px;top:604px;line-height:19px;font-size:11px;color:#75bfff;font-family:'Liberation Sans', sans-serif;;letter-spacing:-1.042px">TE:</div>
<div class="t" style="left:1068px;top:604px;line-height:19px;font-size:11px;color:#d7d7db;font-family:'Liberation Sans', sans-serif;;letter-spacing:0.225px">trailers</div>
<svg style="position:absolute;left:1020px;top:626px;" width="14" height="14" viewBox="0 0 14 14"><circle cx="7" cy="7" r="6.3" stroke="#5c5c60" stroke-width="1.2" fill="none"/><path d="M5 5.3 a2 2 0 1 1 3 1.7 q-1 0.6 -1 1.8" stroke="#5c5c60" stroke-width="1.1" fill="none"/><rect x="6.4" y="9.6" width="1.3" height="1.3" fill="#5c5c60"/></svg>
<div class="t" style="left:1047px;top:623px;line-height:19px;font-size:11px;color:#75bfff;font-family:'Liberation Sans', sans-serif;;letter-spacing:0.116px">User-Agent:</div>
<div class="t" style="left:1114px;top:623px;line-height:19px;font-size:11px;color:#d7d7db;font-family:'Liberation Sans', sans-serif;;letter-spacing:0.088px">Mozilla/5.0 (Windows NT 10.0; Win64; x64; rv:95.0) Gecko/20100101 Firefox/95.0</div>
<div style="position:absolute;left:0px;top:0px;width:1px;height:872px;background:#2e2e2e;"></div>
<div style="position:absolute;left:1559px;top:0px;width:1px;height:872px;background:#2e2e2e;"></div>
<div style="position:absolute;left:0px;top:871px;width:1560px;height:1px;background:#2e2e2e;"></div>
<div style="position:absolute;left:-10px;top:135px;width:1017px;height:53px;border:4px solid #ff0000;border-radius:5px;box-sizing:border-box"></div>
<svg style="position:absolute;left:484px;top:657px;" width="13" height="20" viewBox="0 0 13 20"><path d="M0.5 0.5 L0.5 16.5 L4.5 12.8 L7.5 18.8 L9.8 17.8 L7 11.8 L12 11.8 Z" fill="#fff" stroke="#000" stroke-width="1" stroke-linejoin="round"/></svg>
</body></html>
